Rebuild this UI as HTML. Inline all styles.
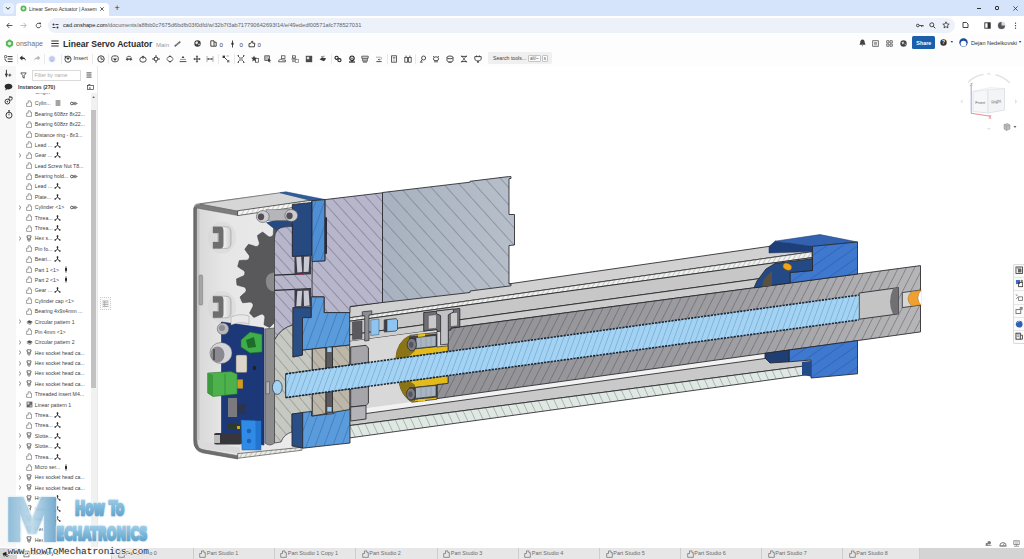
<!DOCTYPE html>
<html lang="en"><head><meta charset="utf-8"><title>Linear Servo Actuator | Assembly 1</title>
<style>
*{box-sizing:border-box}
html,body{margin:0;padding:0}
body{width:1024px;height:559px;overflow:hidden;position:relative;background:#fff;font-family:"Liberation Sans",sans-serif;color:#333}
.abs{position:absolute}
.t{position:absolute;white-space:nowrap;line-height:1}
#tabstrip{left:0;top:0;width:1024px;height:16px;background:#d5e3fb}
#tab{left:16px;top:3px;width:93px;height:13px;background:#fff;border-radius:4px 4px 0 0}
#addr{left:0;top:16px;width:1024px;height:18px;background:#fff}
#pill{left:48px;top:18.3px;width:906.5px;height:14.4px;border-radius:7.5px;background:#edf1f9}
#hdr{left:0;top:34px;width:1024px;height:18px;background:#fdfdfd}
#tb{left:0;top:52px;width:1024px;height:14px;background:#fdfdfd}
#rail{left:0;top:66px;width:16px;height:481px;background:#f7f7f7}
#panel{left:16px;top:66px;width:82px;border-right:0.6px solid #e9e9e9;height:481px;background:#fff;overflow:hidden}
#sbtrack{left:90.6px;top:93px;width:6px;height:454px;background:#f1f1f1}
#sbthumb{left:91px;top:110px;width:5px;height:278px;background:#c2c2c2}
.row{position:absolute;left:0;height:10.4px;width:74px;font-size:5.6px;color:#3a3a3a}
.row span{position:absolute;top:2.3px;white-space:nowrap;line-height:1}
#btm{left:0;top:547.6px;width:1024px;height:12px;background:#d4d4d4}
.bt{position:absolute;top:0;height:12px;font-size:5.45px;color:#6a6a6a;border-right:0.6px solid #cdcdcd;background:#e7e7e7}
.bt span{position:absolute;left:13.3px;top:3.8px;white-space:nowrap;line-height:1}
</style></head><body>
<!-- browser tab strip -->
<div id="tabstrip" class="abs"></div>
<div class="abs" style="left:2.5px;top:3px;width:11px;height:10.5px;border-radius:3.5px;background:#e9f0fd"></div>
<svg class="abs" style="left:5px;top:5.5px" width="6" height="5" viewBox="0 0 6 5"><path d="M1 1.2 L3 3.3 L5 1.2" fill="none" stroke="#333" stroke-width="1"/></svg>
<div id="tab" class="abs"></div>
<svg class="abs" style="left:19.5px;top:5px" width="7" height="7" viewBox="0 0 7 7"><circle cx="3.5" cy="3.5" r="3" fill="#5bb75b"/><circle cx="3.5" cy="3.5" r="1.2" fill="#d9f0d9"/></svg>
<div class="t" style="left:29px;top:6.6px;font-size:5.05px;color:#333">Linear Servo Actuator | Assem</div>
<svg class="abs" style="left:100.2px;top:7px" width="4" height="4" viewBox="0 0 4 4"><path d="M0.3 0.3L3.7 3.7M3.7 0.3L0.3 3.7" stroke="#333" stroke-width="0.8"/></svg>
<div class="t" style="left:114.5px;top:3.5px;font-size:9px;color:#333">+</div>
<div class="abs" style="left:976.5px;top:8px;width:4.6px;height:0.7px;background:#333"></div>
<div class="abs" style="left:994.7px;top:6px;width:4.4px;height:4.4px;border:0.6px solid #333;border-radius:1px"></div>
<svg class="abs" style="left:1012.7px;top:5.6px" width="5" height="5" viewBox="0 0 5 5"><path d="M0.4 0.4L4.6 4.6M4.6 0.4L0.4 4.6" stroke="#333" stroke-width="0.8"/></svg>
<!-- address bar -->
<div id="addr" class="abs"></div>
<svg class="abs" style="left:5.5px;top:22.2px" width="7" height="7" viewBox="0 0 7 7"><path d="M6.4 3.5H1M3.4 0.9L0.8 3.5L3.4 6.1" fill="none" stroke="#444" stroke-width="0.9"/></svg>
<svg class="abs" style="left:19.7px;top:22.2px" width="7" height="7" viewBox="0 0 7 7"><path d="M0.6 3.5H6M3.6 0.9L6.2 3.5L3.6 6.1" fill="none" stroke="#b4b4b4" stroke-width="0.9"/></svg>
<svg class="abs" style="left:34.5px;top:22px" width="7" height="7" viewBox="0 0 7 7"><path d="M5.8 3.5 A2.3 2.3 0 1 1 5 1.8" fill="none" stroke="#444" stroke-width="0.9"/><path d="M4 0.6 L6.2 0.8 L5.6 2.8 Z" fill="#444"/></svg>
<div id="pill" class="abs"></div>
<svg class="abs" style="left:52px;top:22.5px" width="7" height="6" viewBox="0 0 7 6"><circle cx="1.5" cy="1.5" r="1" fill="#333"/><path d="M3.5 1.5H6.5M0.5 4.5H3.5" stroke="#333" stroke-width="0.9"/><circle cx="5.5" cy="4.5" r="1" fill="#333"/></svg>
<div class="t" style="left:63px;top:23px;font-size:5.65px;color:#222">cad.onshape.com<span style="color:#5f6368">/documents/a8fbb0c7675d6bdfb03f0dfd/w/32b7f3ab717790642693f14/e/49ededf00571afc778527031</span></div>
<svg class="abs" style="left:916px;top:22.5px" width="8" height="5" viewBox="0 0 8 5"><circle cx="1.8" cy="2.5" r="1.3" fill="none" stroke="#333" stroke-width="0.9"/><path d="M3.1 2.5H7.4M5.6 2.5V4M7 2.5V3.6" stroke="#333" stroke-width="0.8"/></svg>
<svg class="abs" style="left:929px;top:21.7px" width="7" height="7" viewBox="0 0 7 7"><circle cx="2.8" cy="2.8" r="2" fill="none" stroke="#333" stroke-width="0.9"/><path d="M4.3 4.3L6.3 6.3" stroke="#333" stroke-width="1"/></svg>
<svg class="abs" style="left:941.5px;top:21.3px" width="8" height="8" viewBox="0 0 8 8"><path d="M4 0.8L4.95 2.95L7.2 3.15L5.5 4.65L6 6.9L4 5.7L2 6.9L2.5 4.65L0.8 3.15L3.05 2.95Z" fill="none" stroke="#333" stroke-width="0.8" stroke-linejoin="round"/></svg>
<svg class="abs" style="left:962px;top:21.2px" width="7" height="8" viewBox="0 0 7 8"><path d="M1 1.5H4.5L6 3V6.5H1Z" fill="none" stroke="#333" stroke-width="0.9"/></svg>
<svg class="abs" style="left:983.5px;top:21.7px" width="7" height="7" viewBox="0 0 7 7"><rect x="0.8" y="0.8" width="5.4" height="5.4" fill="none" stroke="#333" stroke-width="0.9"/><rect x="3.6" y="0.8" width="2.6" height="5.4" fill="#333"/></svg>
<svg class="abs" style="left:997px;top:20.7px" width="9" height="9" viewBox="0 0 9 9"><circle cx="4.5" cy="4.5" r="4" fill="#d8dce3"/><path d="M4.5 1A3.5 3.5 0 1 0 8 4.5L4.5 4.5Z" fill="#555"/></svg>
<svg class="abs" style="left:1014px;top:21.5px" width="3" height="8" viewBox="0 0 3 8"><circle cx="1.5" cy="1.2" r="0.65" fill="#333"/><circle cx="1.5" cy="3.7" r="0.65" fill="#333"/><circle cx="1.5" cy="6.2" r="0.65" fill="#333"/></svg>
<!-- onshape header -->
<div id="hdr" class="abs"></div>
<svg class="abs" style="left:4.5px;top:38.5px" width="9" height="9" viewBox="0 0 9 9"><path d="M4.5 0.3L8.1 2.4V6.6L4.5 8.7L0.9 6.6V2.4Z" fill="#5cb85c"/><circle cx="4.5" cy="4.5" r="1.7" fill="#d9f2d9"/></svg>
<div class="t" style="left:15.5px;top:39.6px;font-size:7.4px;color:#707070;transform:scaleX(0.95);transform-origin:0 0">onshape</div>
<svg class="abs" style="left:51px;top:39.5px" width="8" height="7" viewBox="0 0 8 7"><path d="M0.3 1H7.7M0.3 3.5H7.7M0.3 6H7.7" stroke="#333" stroke-width="1.2"/></svg>
<div class="t" style="left:63px;top:40.1px;font-size:8.6px;font-weight:bold;color:#2b2b2b">Linear Servo Actuator</div>
<div class="t" style="left:156px;top:41.9px;font-size:6px;color:#999">Main</div>
<svg class="abs" style="left:174px;top:40.5px" width="7" height="6" viewBox="0 0 7 6"><path d="M1.2 4.8L5.8 1.2" stroke="#444" stroke-width="1.6" stroke-linecap="round"/><path d="M1.6 4.4L5.4 1.6" stroke="#fdfdfd" stroke-width="0.5"/></svg>
<svg class="abs" style="left:193.5px;top:40px" width="7" height="7" viewBox="0 0 7 7"><circle cx="3.5" cy="3.5" r="3.2" fill="#3a3a3a"/><path d="M1.2 2.4L3 1L4.2 2.6L3 4.4L1.6 3.8ZM4.6 3.4L6 3.8L5.2 5.6L4.2 5Z" fill="#e8e8e8"/></svg>
<svg class="abs" style="left:209.5px;top:40px" width="7" height="7" viewBox="0 0 7 7"><path d="M0.8 0.8H4V6.2H0.8ZM4 2.2H6.2V6.2H4" fill="none" stroke="#333" stroke-width="0.9"/></svg>
<div class="t" style="left:219.5px;top:41.6px;font-size:6.2px;color:#444">0</div>
<svg class="abs" style="left:230px;top:39.5px" width="5" height="8" viewBox="0 0 5 8"><path d="M2.5 0.5V7.5" stroke="#333" stroke-width="0.9"/><circle cx="2.5" cy="3.8" r="1.2" fill="#333"/></svg>
<div class="t" style="left:239.5px;top:41.6px;font-size:6.2px;color:#444">0</div>
<svg class="abs" style="left:247.5px;top:39.5px" width="8" height="8" viewBox="0 0 8 8"><path d="M1 3.6H2.6L4 1L4.8 1.4L4.6 3.2H6.8L6.4 6.8H1Z" fill="none" stroke="#333" stroke-width="0.9" stroke-linejoin="round"/></svg>
<div class="t" style="left:257.5px;top:41.6px;font-size:6.2px;color:#444">0</div>
<!-- header right -->
<svg class="abs" style="left:858.5px;top:39px" width="7" height="8" viewBox="0 0 7 8"><path d="M3.5 0.6C1.8 0.6 1.3 2 1.3 3.6L0.5 5.8H6.5L5.7 3.6C5.7 2 5.2 0.6 3.5 0.6ZM2.7 6.4H4.3L3.5 7.4Z" fill="#444"/></svg>
<svg class="abs" style="left:872.2px;top:39.5px" width="7" height="7" viewBox="0 0 7 7"><rect x="0.7" y="0.7" width="5.6" height="5.6" fill="none" stroke="#555" stroke-width="0.8"/><path d="M2 2.4H5M2 3.6H5M2 4.8H5" stroke="#555" stroke-width="0.6"/></svg>
<svg class="abs" style="left:885.8px;top:39.5px" width="7" height="7" viewBox="0 0 7 7"><path d="M0.7 0.7H3V3H0.7ZM4 0.7H6.3V3H4ZM0.7 4H3V6.3H0.7ZM4 4H6.3V6.3H4Z" fill="none" stroke="#555" stroke-width="0.8"/></svg>
<svg class="abs" style="left:899.5px;top:39.5px" width="7" height="7" viewBox="0 0 7 7"><circle cx="3.5" cy="3.5" r="3.2" fill="#444"/><path d="M1.6 2.4L3.3 1.4L4 3L2.8 4.6ZM4.6 3.6L5.8 4L5 5.4Z" fill="#ddd"/></svg>
<div class="abs" style="left:911.6px;top:36.2px;width:23.5px;height:12.6px;background:#1b5faa;border-radius:1.5px"></div>
<div class="t" style="left:916.3px;top:40.9px;font-size:5.4px;font-weight:bold;color:#fff">Share</div>
<svg class="abs" style="left:939.9px;top:39.3px" width="7" height="7" viewBox="0 0 7 7"><circle cx="3.5" cy="3.5" r="3.2" fill="#333"/><text x="3.5" y="5.4" font-size="5" font-weight="bold" text-anchor="middle" fill="#fff" font-family="Liberation Sans, sans-serif">?</text></svg>
<div class="t" style="left:950px;top:41.3px;font-size:3.6px;color:#333">▼</div>
<svg class="abs" style="left:959.2px;top:38.2px" width="9" height="9" viewBox="0 0 9 9"><circle cx="4.5" cy="4.5" r="4.2" fill="#1a4a9c"/><circle cx="4.5" cy="5.6" r="2.9" fill="#fff"/></svg>
<div class="t" style="left:971px;top:40.7px;font-size:5.55px;color:#333">Dejan Nedelkovski</div>
<div class="t" style="left:1018.3px;top:41.3px;font-size:3.6px;color:#333">▼</div>
<div id="tb" class="abs"></div>
<svg class="abs" style="left:3.5px;top:54.5px" width="9" height="8" viewBox="0 0 9 8"><circle cx="1.6" cy="1.6" r="1.2" fill="none" stroke="#3a3a3a" stroke-width="0.8"/><path d="M3.6 1.6H8.6M3.6 4H8.6M3.6 6.6H8.6" stroke="#3a3a3a" stroke-width="1"/><path d="M0.6 3.6L2.6 6.8" stroke="#3a3a3a" stroke-width="0.9"/></svg>
<div class="abs" style="left:16.5px;top:54px;width:0.6px;height:10px;background:#e9e9e9"></div>
<svg class="abs" style="left:18.5px;top:55.0px" width="8" height="7" viewBox="0 0 8 7"><path d="M3.4 0.6L0.6 3L3.4 5.4V3.8C5.2 3.8 6.2 4.6 6.8 6.2C6.8 3.6 5.6 2.2 3.4 2.2Z" fill="#2b2b2b"/></svg>
<svg class="abs" style="left:32.5px;top:55.0px" width="8" height="7" viewBox="0 0 8 7"><path d="M4.6 0.6L7.4 3L4.6 5.4V3.8C2.8 3.8 1.8 4.6 1.2 6.2C1.2 3.6 2.4 2.2 4.6 2.2Z" fill="#b5b5b5"/></svg>
<div class="abs" style="left:44px;top:54px;width:0.6px;height:10px;background:#e9e9e9"></div>
<svg class="abs" style="left:48.0px;top:54.5px" width="8" height="8" viewBox="0 0 8 8"><circle cx="4" cy="4" r="3.5" fill="#dfe6f7"/><circle cx="4" cy="4" r="2" fill="none" stroke="#9fb0e0" stroke-width="0.8"/><path d="M4 3V7" stroke="#9fb0e0" stroke-width="0.8"/></svg>
<div class="abs" style="left:60.5px;top:54px;width:0.6px;height:10px;background:#e9e9e9"></div>
<svg class="abs" style="left:64.0px;top:54.5px" width="8" height="8" viewBox="0 0 8 8"><circle cx="4" cy="4.2" r="3.1" fill="none" stroke="#3a3a3a" stroke-width="0.9"/><path d="M2.2 2.6H5.8L4.8 4.6H3.2Z" fill="#3a3a3a"/><path d="M1.4 0.8V2.6M0.5 1.7H2.3" stroke="#3a3a3a" stroke-width="0.7"/></svg>
<div class="t" style="left:73.5px;top:55.8px;font-size:5.7px;color:#333">Insert</div>
<div class="abs" style="left:92px;top:54px;width:0.6px;height:10px;background:#e9e9e9"></div>
<svg class="abs" style="left:96.5px;top:54.5px" width="8" height="8" viewBox="0 0 8 8"><circle cx="4" cy="4" r="3.2" fill="none" stroke="#3a3a3a" stroke-width="1"/><path d="M4 2V4.2H6" fill="none" stroke="#3a3a3a" stroke-width="0.9"/></svg>
<div class="abs" style="left:108px;top:54px;width:0.6px;height:10px;background:#e9e9e9"></div>
<svg class="abs" style="left:111.0px;top:54.5px" width="8" height="8" viewBox="0 0 8 8"><path d="M0.8 2.2C0.8 0.4 7.2 0.4 7.2 2.2V5C7.2 7.4 0.8 7.4 0.8 5Z" fill="none" stroke="#3a3a3a" stroke-width="0.9"/><path d="M2 3.6H6L4 6Z" fill="#3a3a3a"/></svg>
<svg class="abs" style="left:124.7px;top:54.5px" width="8" height="8" viewBox="0 0 8 8"><path d="M0.6 4.2L2.6 2.4V3.6H5.4V2.4L7.4 4.2L5.4 6V4.8H2.6V6Z" fill="#3a3a3a"/><path d="M1.6 2.6C2.4 0.8 5.6 0.8 6.4 2.6" fill="none" stroke="#3a3a3a" stroke-width="0.8"/></svg>
<svg class="abs" style="left:138.5px;top:54.5px" width="8" height="8" viewBox="0 0 8 8"><ellipse cx="4" cy="4.6" rx="3.2" ry="2.6" fill="none" stroke="#3a3a3a" stroke-width="0.9"/><path d="M4 0.4L5.4 2H2.6Z" fill="#3a3a3a"/><path d="M4 2V4" stroke="#3a3a3a" stroke-width="0.8"/></svg>
<svg class="abs" style="left:152.0px;top:54.5px" width="8" height="8" viewBox="0 0 8 8"><path d="M4 0.5V7.5M0.5 4H7.5" stroke="#3a3a3a" stroke-width="0.9"/><rect x="2.6" y="2.6" width="2.8" height="2.8" fill="#fdfdfd" stroke="#3a3a3a" stroke-width="0.7"/><path d="M4 0.2L4.9 1.3H3.1ZM4 7.8L3.1 6.7H4.9ZM0.2 4L1.3 3.1V4.9ZM7.8 4L6.7 4.9V3.1Z" fill="#3a3a3a"/></svg>
<svg class="abs" style="left:165.7px;top:54.5px" width="8" height="8" viewBox="0 0 8 8"><path d="M1.6 3A2.6 2.6 0 0 1 6.4 3M6.4 5A2.6 2.6 0 0 1 1.6 5" fill="none" stroke="#3a3a3a" stroke-width="0.9"/><path d="M4 0.2L5.2 1.6H2.8ZM4 7.8L2.8 6.4H5.2ZM0.2 4L1.5 2.9V5.1ZM7.8 4L6.5 5.1V2.9Z" fill="#3a3a3a"/></svg>
<svg class="abs" style="left:179.3px;top:54.5px" width="8" height="8" viewBox="0 0 8 8"><path d="M0.6 6.6H7.4" stroke="#3a3a3a" stroke-width="0.9"/><path d="M1 4.4H7" stroke="#888" stroke-width="0.9"/><path d="M4 0.8L5.4 3H2.6Z" fill="#3a3a3a"/></svg>
<svg class="abs" style="left:192.7px;top:54.5px" width="8" height="8" viewBox="0 0 8 8"><path d="M4 0.3L5.3 1.8H2.7ZM4 7.7L2.7 6.2H5.3ZM0.3 4L1.8 2.7V5.3ZM7.7 4L6.2 5.3V2.7Z" fill="#3a3a3a"/><path d="M4 1.4V6.6M1.4 4H6.6" stroke="#3a3a3a" stroke-width="1"/></svg>
<svg class="abs" style="left:206.3px;top:54.5px" width="8" height="8" viewBox="0 0 8 8"><path d="M1 1V7M7 1V7" stroke="#999" stroke-width="0.8"/><path d="M1.6 4H6.4" stroke="#3a3a3a" stroke-width="0.9"/><path d="M1.2 4L2.6 3V5ZM6.8 4L5.4 5V3Z" fill="#3a3a3a"/></svg>
<div class="abs" style="left:218px;top:54px;width:0.6px;height:10px;background:#e9e9e9"></div>
<svg class="abs" style="left:222.0px;top:54.5px" width="8" height="8" viewBox="0 0 8 8"><path d="M1 1L7 7" stroke="#3a3a3a" stroke-width="0.9"/><path d="M0.6 0.6H3V3H0.6Z" fill="#3a3a3a"/><path d="M5 5H7.4V7.4H5Z" fill="#777"/><path d="M4.5 1H7" stroke="#888" stroke-width="0.7"/></svg>
<div class="abs" style="left:233.5px;top:54px;width:0.6px;height:10px;background:#e9e9e9"></div>
<svg class="abs" style="left:237.2px;top:54.5px" width="8" height="8" viewBox="0 0 8 8"><path d="M1 1L7 7M7 1L1 7" stroke="#3a3a3a" stroke-width="0.9"/><rect x="2.2" y="2.2" width="3.6" height="3.6" fill="#aaa"/><path d="M0.5 0.5H2M6 0.5H7.5M0.5 7.5H2M6 7.5H7.5" stroke="#3a3a3a" stroke-width="0.8"/></svg>
<svg class="abs" style="left:250.5px;top:54.5px" width="8" height="8" viewBox="0 0 8 8"><path d="M3 0.6L3.8 2.6L5.8 2.8L4.2 4.2L4.8 6.4L3 5.2L1.2 6.4L1.8 4.2L0.2 2.8L2.2 2.6Z" fill="#3a3a3a"/><rect x="4.6" y="3.4" width="3" height="3.8" fill="none" stroke="#3a3a3a" stroke-width="0.7"/></svg>
<svg class="abs" style="left:263.8px;top:54.5px" width="8" height="8" viewBox="0 0 8 8"><rect x="0.8" y="0.8" width="4.6" height="4.6" fill="#bbb" stroke="#3a3a3a" stroke-width="0.7"/><path d="M4 3.6L7.4 5.4L5.8 5.8L6.6 7.4L5.8 7.6L5.2 6.2L4 7Z" fill="#3a3a3a"/></svg>
<svg class="abs" style="left:277.5px;top:54.5px" width="8" height="8" viewBox="0 0 8 8"><rect x="3.4" y="0.8" width="3.6" height="2.6" fill="none" stroke="#3a3a3a" stroke-width="0.7"/><path d="M0.6 6.8C0.6 4.4 3 3.6 4.4 5H7.4V6.8Z" fill="none" stroke="#3a3a3a" stroke-width="0.8"/></svg>
<svg class="abs" style="left:291.0px;top:54.5px" width="8" height="8" viewBox="0 0 8 8"><rect x="1.4" y="0.8" width="3" height="2.2" fill="none" stroke="#3a3a3a" stroke-width="0.7"/><path d="M0.4 4H5.4M3 3V4" stroke="#3a3a3a" stroke-width="0.7"/><rect x="4.6" y="4.4" width="2.8" height="3" fill="none" stroke="#777" stroke-width="0.7"/><path d="M1 5.2H4M1 6.6H4" stroke="#3a3a3a" stroke-width="0.6"/></svg>
<svg class="abs" style="left:304.7px;top:54.5px" width="8" height="8" viewBox="0 0 8 8"><rect x="0.8" y="0.8" width="6.4" height="6.4" fill="#4a4a4a"/><rect x="1.8" y="1.8" width="2.4" height="2.4" fill="#ddd"/></svg>
<svg class="abs" style="left:318.5px;top:54.5px" width="8" height="8" viewBox="0 0 8 8"><path d="M0.6 4.6L3 2.2L7.2 3.4L5 6.2Z" fill="#3a3a3a"/><path d="M2 1.6L5.6 1.2" stroke="#777" stroke-width="0.8"/></svg>
<div class="abs" style="left:330.5px;top:54px;width:0.6px;height:10px;background:#e9e9e9"></div>
<svg class="abs" style="left:334.0px;top:54.5px" width="8" height="8" viewBox="0 0 8 8"><circle cx="2.6" cy="2.8" r="1.6" fill="none" stroke="#222" stroke-width="1.1"/><circle cx="5.4" cy="5.2" r="1.6" fill="none" stroke="#222" stroke-width="1.1"/></svg>
<svg class="abs" style="left:347.7px;top:54.5px" width="8" height="8" viewBox="0 0 8 8"><circle cx="4" cy="3.2" r="2.2" fill="none" stroke="#222" stroke-width="1.2"/><circle cx="4" cy="3.2" r="0.7" fill="#222"/><path d="M1 7H7" stroke="#222" stroke-width="1.2"/><path d="M4 5.2V7" stroke="#222" stroke-width="1"/></svg>
<svg class="abs" style="left:361.0px;top:54.5px" width="8" height="8" viewBox="0 0 8 8"><path d="M0.8 1.2H7.2V3.2H0.8Z" fill="none" stroke="#3a3a3a" stroke-width="0.8"/><path d="M1.6 3.2V6.2H6.4V3.2M3 3.2V6.2M5 3.2V6.2" fill="none" stroke="#3a3a3a" stroke-width="0.7"/><path d="M2 7.2H6" stroke="#3a3a3a" stroke-width="0.7"/></svg>
<svg class="abs" style="left:374.5px;top:54.5px" width="8" height="8" viewBox="0 0 8 8"><path d="M1 2.2H5.4C7 2.2 7 4.6 5.4 4.6H3" fill="none" stroke="#999" stroke-width="0.8"/><path d="M1.4 6.6H6.6" stroke="#3a3a3a" stroke-width="0.9"/><path d="M3 4.6L4.4 3.6V5.6Z" fill="#3a3a3a"/></svg>
<div class="abs" style="left:386.5px;top:54px;width:0.6px;height:10px;background:#e9e9e9"></div>
<svg class="abs" style="left:390.0px;top:54.5px" width="8" height="8" viewBox="0 0 8 8"><rect x="1.6" y="0.8" width="4.8" height="6.4" fill="none" stroke="#3a3a3a" stroke-width="0.8"/><rect x="2.8" y="2" width="2.6" height="1.6" fill="#888"/><path d="M2.8 5H5.4M2.8 6H5.4" stroke="#888" stroke-width="0.5"/></svg>
<svg class="abs" style="left:403.5px;top:54.5px" width="8" height="8" viewBox="0 0 8 8"><rect x="0.8" y="2.4" width="2.6" height="4.8" fill="none" stroke="#3a3a3a" stroke-width="0.8"/><rect x="4.6" y="2.4" width="2.6" height="4.8" fill="none" stroke="#3a3a3a" stroke-width="0.8"/><path d="M2.1 0.6V2.4M5.9 0.6V2.4" stroke="#3a3a3a" stroke-width="0.8"/></svg>
<div class="abs" style="left:415px;top:54px;width:0.6px;height:10px;background:#e9e9e9"></div>
<svg class="abs" style="left:418.7px;top:54.5px" width="8" height="8" viewBox="0 0 8 8"><circle cx="4.6" cy="3" r="2" fill="none" stroke="#3a3a3a" stroke-width="0.9"/><path d="M3.2 4.6L1.4 7.2H3.6" fill="none" stroke="#3a3a3a" stroke-width="0.9"/></svg>
<svg class="abs" style="left:432.0px;top:54.5px" width="8" height="8" viewBox="0 0 8 8"><ellipse cx="4" cy="3.8" rx="2.6" ry="2" fill="none" stroke="#3a3a3a" stroke-width="0.9"/><path d="M1 1L2 2M7 1L6 2M2 6.8H6" stroke="#3a3a3a" stroke-width="0.8"/></svg>
<svg class="abs" style="left:446.0px;top:54.5px" width="8" height="8" viewBox="0 0 8 8"><ellipse cx="4" cy="2.4" rx="3" ry="1.4" fill="none" stroke="#3a3a3a" stroke-width="0.9"/><path d="M1 2.4V5.6C1 7.4 7 7.4 7 5.6V2.4" fill="none" stroke="#3a3a3a" stroke-width="0.9"/><path d="M2.4 7.4H5.6" stroke="#3a3a3a" stroke-width="0.7"/></svg>
<svg class="abs" style="left:459.7px;top:54.5px" width="8" height="8" viewBox="0 0 8 8"><path d="M1 1.4H7M1 6.6H7" stroke="#3a3a3a" stroke-width="0.9"/><path d="M1.4 0.6L6.6 7.4M6.6 0.6L1.4 7.4" stroke="#3a3a3a" stroke-width="0.7"/></svg>
<svg class="abs" style="left:473.5px;top:54.5px" width="8" height="8" viewBox="0 0 8 8"><path d="M0.8 1.6H7.2V4C7.2 5.2 5.6 5.6 4.6 5.6V7.4H3.4V5.6C2.4 5.6 0.8 5.2 0.8 4Z" fill="none" stroke="#3a3a3a" stroke-width="0.9"/><path d="M2.6 0.4V2M5.4 0.4V2" stroke="#3a3a3a" stroke-width="0.8"/></svg>
<div class="abs" style="left:488.3px;top:52.2px;width:63.6px;height:11.6px;background:#f0f0f0;border-radius:1px"></div>
<div class="t" style="left:493px;top:55.9px;font-size:5.2px;color:#444">Search tools...</div>
<div class="abs" style="left:528px;top:55.3px;width:13.4px;height:6.5px;border:0.5px solid #c4c4c4;background:#fbfbfb;border-radius:1px"></div><div class="t" style="left:530px;top:57.2px;font-size:4.5px;color:#555">alt/~</div>
<div class="abs" style="left:541.8px;top:55.3px;width:5.9px;height:6.5px;border:0.5px solid #c4c4c4;background:#fbfbfb;border-radius:1px"></div><div class="t" style="left:543.7px;top:57.2px;font-size:4.5px;color:#555">s</div>
<svg class="abs" style="left:0;top:0" width="1024" height="559" viewBox="0 0 1024 559">
<defs>
<pattern id="hL" width="8.8" height="8.8" patternUnits="userSpaceOnUse" patternTransform="rotate(48)"><path d="M0 0H9" stroke="#5f5d78" stroke-width="0.9"/></pattern>
<pattern id="hS" width="11.5" height="11.5" patternUnits="userSpaceOnUse" patternTransform="rotate(48)"><path d="M0 0H12" stroke="#5d6879" stroke-width="0.9"/></pattern>
<pattern id="hR" width="7.2" height="7.2" patternUnits="userSpaceOnUse" patternTransform="rotate(-63)"><path d="M0 0H7" stroke="#46464c" stroke-width="0.8"/></pattern>
<pattern id="hW" width="5.2" height="5.2" patternUnits="userSpaceOnUse" patternTransform="rotate(-70)"><path d="M0 0H6" stroke="#4583b5" stroke-width="0.7"/></pattern>
<pattern id="hB" width="8.3" height="8.3" patternUnits="userSpaceOnUse" patternTransform="rotate(-70)"><path d="M0 0H9" stroke="#2a5a9c" stroke-width="0.8"/></pattern>
<pattern id="hB2" width="9" height="9" patternUnits="userSpaceOnUse" patternTransform="rotate(-35)"><path d="M0 0H9" stroke="#244f96" stroke-width="0.8"/></pattern>
<pattern id="hT" width="7.25" height="7.25" patternUnits="userSpaceOnUse" patternTransform="rotate(65)"><path d="M0 0H8" stroke="#55605c" stroke-width="0.7"/></pattern>
<pattern id="hG" width="8.5" height="8.5" patternUnits="userSpaceOnUse" patternTransform="rotate(50)"><path d="M0 0H9" stroke="#6c6c66" stroke-width="0.8"/></pattern>
<pattern id="hH" width="4" height="4" patternUnits="userSpaceOnUse" patternTransform="rotate(-60)"><path d="M0 0H4" stroke="#666" stroke-width="0.6"/></pattern>
<linearGradient id="gHouse" x1="0" x2="1" y1="0" y2="0"><stop offset="0" stop-color="#d6d6d6"/><stop offset="0.25" stop-color="#e6e6e6"/><stop offset="1" stop-color="#ececec"/></linearGradient>
<linearGradient id="gRod" gradientUnits="userSpaceOnUse" x1="440" x2="920" y1="0" y2="0"><stop offset="0" stop-color="#929296"/><stop offset="0.6" stop-color="#9e9ea2"/><stop offset="1" stop-color="#b6b6b9"/></linearGradient>
<linearGradient id="gClip" x1="0" x2="1" y1="0" y2="0"><stop offset="0" stop-color="#c8c8c8"/><stop offset="0.5" stop-color="#f6f6f6"/><stop offset="1" stop-color="#cfcfcf"/></linearGradient>
</defs>
<polygon points="325.0,310.4 812.0,240.2 812.0,251.7 325.0,321.3" fill="#d1d1d1" stroke="#26262a" stroke-width="0.85" stroke-linejoin="round"/>
<polygon points="325.0,321.3 812.0,251.7 812.0,257.6 325.0,324.6" fill="#eef1ee"/>
<polygon points="325.0,321.3 812.0,251.7 812.0,257.6 325.0,324.6" fill="url(#hH)" stroke="#333" stroke-width="0.8"/>
<polygon points="325.0,324.6 812.0,257.6 812.0,271.4 325.0,338.3" fill="#c7c7c7" stroke="#26262a" stroke-width="0.85" stroke-linejoin="round"/>
<polygon points="325.0,338.3 812.0,271.4 812.0,280.1 325.0,344.8" fill="#cdcdcd" stroke="#26262a" stroke-width="0.85" stroke-linejoin="round"/>
<polygon points="325.0,414.1 812.0,346.9 812.0,352.0 325.0,419.2" fill="#f2f2f2" stroke="none"/>
<polygon points="325.0,419.2 812.0,352.0 812.0,365.0 325.0,428.8" fill="#c9c9c9" stroke="#26262a" stroke-width="0.85" stroke-linejoin="round"/>
<polygon points="325.0,428.8 811.0,365.1 811.0,374.2 325.0,441.3" fill="#dfe8e3"/>
<polygon points="325.0,428.8 811.0,365.1 811.0,374.2 325.0,441.3" fill="url(#hT)" stroke="#26262a" stroke-width="0.85" stroke-linejoin="round"/>
<polygon points="350.0,341.5 470.0,325.6 470.0,394.1 350.0,410.6" fill="#d8d8d8" stroke="none"/>
<linearGradient id="gServo" gradientUnits="userSpaceOnUse" x1="382" x2="512" y1="0" y2="0"><stop offset="0" stop-color="#a8b1bf"/><stop offset="1" stop-color="#b6bfc9"/></linearGradient>
<polygon points="382.5,192.5 470.0,182.2 470.0,181.3 508.5,176.6 511.0,176.6 511.0,178.5 509.0,178.7 509.0,214.5 514.5,214.5 514.5,245.0 509.0,245.5 509.0,284.0 511.0,284.0 511.0,285.8 470.0,291.0 470.0,292.5 382.5,302.5" fill="url(#gServo)"/>
<polygon points="382.5,192.5 470.0,182.2 470.0,181.3 508.5,176.6 511.0,176.6 511.0,178.5 509.0,178.7 509.0,214.5 514.5,214.5 514.5,245.0 509.0,245.5 509.0,284.0 511.0,284.0 511.0,285.8 470.0,291.0 470.0,292.5 382.5,302.5" fill="url(#hS)" stroke="#26262a" stroke-width="0.85" stroke-linejoin="round"/>
<polygon points="325.0,199.6 382.5,192.8 382.5,302.5 350.0,306.5 350.0,312.6 324.1,312.6 324.1,296.9 311.3,296.9 311.3,288.5 312.0,261.0 325.0,260.8" fill="#b8b6cb"/>
<polygon points="325.0,199.6 382.5,192.8 382.5,302.5 350.0,306.5 350.0,312.6 324.1,312.6 324.1,296.9 311.3,296.9 311.3,288.5 312.0,261.0 325.0,260.8" fill="url(#hL)" stroke="#26262a" stroke-width="0.85" stroke-linejoin="round"/>
<path d="M197 204 L280 193 L312 200 L312 446 L240 456 L198 449 Q194 448 194 442 L194 210 Q194 204 197 204Z" fill="url(#gHouse)" stroke="#666" stroke-width="0.6"/>
<polygon points="200.0,204.0 280.0,192.8 312.0,200.2 238.0,211.3" fill="#d6d6d6" stroke="#555" stroke-width="0.6"/>
<polygon points="194.2,208.0 196.0,205.2 200.0,204.3 238.0,211.2 238.0,215.6 197.0,208.2" fill="#7c7c7c" stroke="#555" stroke-width="0.4"/>
<path d="M195.5 207 L195.5 440 Q195.6 449.8 203 451.2 L238 457.4" fill="none" stroke="#6f6f6f" stroke-width="3.3"/>
<path d="M193.9 208 L193.9 440.5 Q194 451 202.6 452.8 L238 459" fill="none" stroke="#4e4e4e" stroke-width="0.6"/>
<path d="M198.2 210 L198.2 440" fill="none" stroke="#c4c4c4" stroke-width="2.6"/>
<polygon points="237.5,210.8 311.5,200.2 311.5,204.8 237.5,215.6" fill="#f6f6f4"/>
<polygon points="237.5,210.8 311.5,200.2 311.5,204.8 237.5,215.6" fill="url(#hH)" stroke="#333" stroke-width="0.7"/>
<polygon points="199.0,441.0 240.0,447.5 240.0,454.0 199.0,447.5" fill="#dadada" stroke="none"/>
<polygon points="237.7,453.6 302.0,447.3 302.0,450.2 237.7,458.3" fill="#ecece6"/>
<polygon points="237.7,453.6 302.0,447.3 302.0,450.2 237.7,458.3" fill="url(#hH)" stroke="#333" stroke-width="0.6"/>
<rect x="199" y="275" width="3.6" height="30" rx="1" fill="#a5a5a5" stroke="#777" stroke-width="0.5"/>
<ellipse cx="222" cy="237.6" rx="14" ry="16" fill="#d2d2d2" opacity="0.45"/>
<path d="M213 226.79999999999998 H226 Q231 226.79999999999998 231 232.1 V243.1 Q231 248.4 226 248.4 H213 V242.1 H218 V233.1 H213Z" fill="url(#gClip)" stroke="#8a8a8a" stroke-width="0.5"/>
<path d="M213 226.79999999999998 H221 Q223.5 226.79999999999998 223.5 231.1 V244.1 Q223.5 248.4 221 248.4 H213 V242.1 H218.5 V233.1 H213Z" fill="#6e6e6e"/>
<ellipse cx="222" cy="307" rx="14" ry="16" fill="#d2d2d2" opacity="0.45"/>
<path d="M213 296.2 H226 Q231 296.2 231 301.5 V312.5 Q231 317.8 226 317.8 H213 V311.5 H218 V302.5 H213Z" fill="url(#gClip)" stroke="#8a8a8a" stroke-width="0.5"/>
<path d="M213 296.2 H221 Q223.5 296.2 223.5 300.5 V313.5 Q223.5 317.8 221 317.8 H213 V311.5 H218.5 V302.5 H213Z" fill="#6e6e6e"/>
<clipPath id="cg"><path d="M226 205 H311 V232 H280 L274.5 238 V345 H226Z"/></clipPath>
<polygon points="335.3,282.5 335.1,283.9 336.2,285.4 339.3,287.3 342.3,289.5 341.9,291.0 341.5,292.5 341.1,294.0 340.6,295.5 336.9,295.8 333.3,295.8 331.5,296.6 331.0,297.8 330.4,298.9 330.9,300.8 333.1,303.6 335.2,306.7 334.3,308.0 333.4,309.2 332.5,310.5 331.5,311.7 328.0,310.7 324.6,309.6 322.7,309.6 321.8,310.6 320.8,311.5 320.7,313.4 321.8,316.8 322.6,320.4 321.4,321.3 320.1,322.2 318.8,323.1 317.5,323.9 314.5,321.8 311.7,319.5 309.9,318.9 308.7,319.5 307.5,320.0 306.7,321.7 306.6,325.4 306.2,329.0 304.7,329.4 303.2,329.8 301.7,330.2 300.2,330.5 298.1,327.5 296.2,324.4 294.7,323.3 293.4,323.4 292.1,323.5 290.8,324.8 289.4,328.2 287.8,331.5 286.2,331.4 284.7,331.2 283.1,331.1 281.6,330.8 280.7,327.3 279.9,323.7 278.9,322.1 277.7,321.8 276.4,321.4 274.7,322.3 272.2,324.9 269.6,327.5 268.2,326.9 266.8,326.2 265.4,325.5 264.0,324.8 264.4,321.1 264.9,317.5 264.5,315.7 263.4,314.9 262.4,314.1 260.5,314.4 257.3,316.0 253.9,317.5 252.8,316.4 251.7,315.3 250.6,314.2 249.6,313.1 251.2,309.8 252.9,306.6 253.2,304.7 252.4,303.6 251.7,302.5 249.8,302.1 246.2,302.5 242.6,302.8 241.9,301.4 241.2,300.0 240.6,298.6 240.0,297.1 242.6,294.6 245.4,292.2 246.2,290.5 245.9,289.2 245.6,287.9 244.0,286.9 240.5,286.1 237.0,285.1 236.8,283.5 236.6,282.0 236.6,280.4 236.5,278.9 239.8,277.4 243.2,276.0 244.6,274.8 244.7,273.5 244.9,272.1 243.8,270.6 240.7,268.7 237.7,266.5 238.1,265.0 238.5,263.5 238.9,262.0 239.4,260.5 243.1,260.2 246.7,260.2 248.5,259.4 249.0,258.2 249.6,257.1 249.1,255.2 246.9,252.4 244.8,249.3 245.7,248.0 246.6,246.8 247.5,245.5 248.5,244.3 252.0,245.3 255.4,246.4 257.3,246.4 258.2,245.4 259.2,244.5 259.3,242.6 258.2,239.2 257.4,235.6 258.6,234.7 259.9,233.8 261.2,232.9 262.5,232.1 265.5,234.2 268.3,236.5 270.1,237.1 271.3,236.5 272.5,236.0 273.3,234.3 273.4,230.6 273.8,227.0 275.3,226.6 276.8,226.2 278.3,225.8 279.8,225.5 281.9,228.5 283.8,231.6 285.3,232.7 286.6,232.6 287.9,232.5 289.2,231.2 290.6,227.8 292.2,224.5 293.8,224.6 295.3,224.8 296.9,224.9 298.4,225.2 299.3,228.7 300.1,232.3 301.1,233.9 302.3,234.2 303.6,234.6 305.3,233.7 307.8,231.1 310.4,228.5 311.8,229.1 313.2,229.8 314.6,230.5 316.0,231.2 315.6,234.9 315.1,238.5 315.5,240.3 316.6,241.1 317.6,241.9 319.5,241.6 322.7,240.0 326.1,238.5 327.2,239.6 328.3,240.7 329.4,241.8 330.4,242.9 328.8,246.2 327.1,249.4 326.8,251.3 327.6,252.4 328.3,253.5 330.2,253.9 333.8,253.5 337.4,253.2 338.1,254.6 338.8,256.0 339.4,257.4 340.0,258.9 337.4,261.4 334.6,263.8 333.8,265.5 334.1,266.8 334.4,268.1 336.0,269.1 339.5,269.9 343.0,270.9 343.2,272.5 343.4,274.0 343.4,275.6 343.5,277.1 340.2,278.6 336.8,280.0 335.4,281.2" fill="#59595c" stroke="#3a3a3c" stroke-width="0.5" clip-path="url(#cg)"/>
<path d="M274.5 272 Q265 273 265.5 282 Q266 291 274.5 292Z" fill="#8a8a8e" stroke="#444" stroke-width="0.4"/>
<polygon points="266.0,222.5 292.5,216.0 292.5,226.5 284.0,227.0 276.0,230.5" fill="#264a80" stroke="none"/>
<path id="fl" d="M274.5 238 Q275 228 284 227 L292.5 226.3 L292.5 256 L312 255 L312 298 L311.3 307.7 L292.7 307.7 L292.7 325 Q281 328 274.5 340Z" fill="#b8b6cb"/>
<path d="M274.5 238 Q275 228 284 227 L292.5 226.3 L292.5 256 L312 255 L312 298 L311.3 307.7 L292.7 307.7 L292.7 325 Q281 328 274.5 340Z" fill="url(#hL)" stroke="#2a2a2e" stroke-width="0.7"/>
<path d="M274.5 275.2 L311 273.6 M274.5 290.3 L311 288.7" stroke="#2a2a2e" stroke-width="1.3"/>
<path id="hub" d="M274.5 340 Q281 328 292.7 325 L292.7 357 L302.5 355 L302.5 350 L312.3 349 L312.3 370.2 L285.7 373.9 L285.7 397.6 L312.3 394.0 L312.3 412 L292 414 L292 432 Q284 434 281 442 L274.5 443Z" fill="#c6c8c2"/>
<path d="M274.5 340 Q281 328 292.7 325 L292.7 357 L302.5 355 L302.5 350 L312.3 349 L312.3 370.2 L285.7 373.9 L285.7 397.6 L312.3 394.0 L312.3 412 L292 414 L292 432 Q284 434 281 442 L274.5 443Z" fill="url(#hG)" stroke="#2a2a2e" stroke-width="0.7"/>
<path d="M265 329 L274.5 328 L274.5 443 Q270 447 265 443Z" fill="#8c8c8e" stroke="#4a4a4a" stroke-width="0.7"/>
<polygon points="280.0,192.6 286.0,191.8 325.0,199.5 312.0,200.8" fill="#2f5c9c" stroke="#24487c" stroke-width="0.5"/>
<polygon points="292.3,204.5 312.0,202.5 312.0,255.0 292.3,256.5" fill="#264a80" stroke="#26262a" stroke-width="0.85" stroke-linejoin="round"/>
<polygon points="312.0,200.7 324.8,199.6 324.8,260.8 312.0,261.5" fill="#4f8fd3"/>
<polygon points="312.0,200.7 324.8,199.6 324.8,260.8 312.0,261.5" fill="url(#hB)" stroke="#26262a" stroke-width="0.85" stroke-linejoin="round"/>
<polygon points="324.8,217.5 327.0,217.3 327.0,253.8 324.8,254.0" fill="#2a2a3a" stroke="none"/>
<path d="M294.5 256 L311 255.4 L311 273.4 L294.5 274.2Z" fill="#3c3c48"/><path d="M296.3 257 L301.2 256.8 L302.2 272 L297.3 272.6Z M304 256.7 L309.6 256.4 L308.6 271.7 L303.6 272Z" fill="#c9c9d3"/><path d="M298 274.6 H304" stroke="#a03060" stroke-width="0.8"/>
<path d="M294.5 289.6 L311 288.8 L311 306.6 L294.5 307.2Z" fill="#3c3c48"/><path d="M297.3 291 L302.2 290.8 L301.2 306 L296.3 306.2Z M303.6 290.7 L308.6 290.4 L309.6 305.6 L304 305.9Z" fill="#c9c9d3"/>
<polygon points="293.2,307.7 311.3,307.7 311.3,317.6 302.5,317.6 302.5,355.0 293.2,357.0" fill="#2a4f86" stroke="#26262a" stroke-width="0.85" stroke-linejoin="round"/>
<polygon points="311.3,296.9 324.1,296.9 324.1,312.6 349.7,312.6 349.7,345.1 302.5,350.0 302.5,317.6 311.3,317.6" fill="#5a9bdb"/>
<polygon points="311.3,296.9 324.1,296.9 324.1,312.6 349.7,312.6 349.7,345.1 302.5,350.0 302.5,317.6 311.3,317.6" fill="url(#hB)" stroke="#26262a" stroke-width="0.85" stroke-linejoin="round"/>
<polygon points="292.0,414.0 302.7,412.5 302.7,448.0 292.0,446.0" fill="#2a4f86" stroke="#26262a" stroke-width="0.85" stroke-linejoin="round"/>
<polygon points="302.7,412.4 311.5,411.5 311.5,416.0 334.0,413.5 334.0,409.5 350.0,408.0 350.0,443.0 302.7,448.2" fill="#5a9bdb"/>
<polygon points="302.7,412.4 311.5,411.5 311.5,416.0 334.0,413.5 334.0,409.5 350.0,408.0 350.0,443.0 302.7,448.2" fill="url(#hB)" stroke="#26262a" stroke-width="0.85" stroke-linejoin="round"/>
<polygon points="312.3,349.0 326.0,347.6 326.0,368.3 312.3,370.2" fill="#bdb7aa"/>
<polygon points="312.3,349.0 326.0,347.6 326.0,368.3 312.3,370.2" fill="url(#hG)" stroke="#26262a" stroke-width="0.85" stroke-linejoin="round"/>
<polygon points="326.0,347.6 332.5,346.9 332.5,367.4 326.0,368.3" fill="#5b5b5e" stroke="#26262a" stroke-width="0.85" stroke-linejoin="round"/>
<polygon points="332.5,346.9 349.7,345.1 349.7,365.1 332.5,367.4" fill="#bdb7aa"/>
<polygon points="332.5,346.9 349.7,345.1 349.7,365.1 332.5,367.4" fill="url(#hG)" stroke="#26262a" stroke-width="0.85" stroke-linejoin="round"/>
<polygon points="312.3,394.0 326.0,392.1 326.0,413.6 312.3,416.0" fill="#bdb7aa"/>
<polygon points="312.3,394.0 326.0,392.1 326.0,413.6 312.3,416.0" fill="url(#hG)" stroke="#26262a" stroke-width="0.85" stroke-linejoin="round"/>
<polygon points="326.0,392.1 332.5,391.2 332.5,412.5 326.0,413.6" fill="#5b5b5e" stroke="#26262a" stroke-width="0.85" stroke-linejoin="round"/>
<polygon points="332.5,391.2 349.7,388.9 349.7,409.5 332.5,412.5" fill="#bdb7aa"/>
<polygon points="332.5,391.2 349.7,388.9 349.7,409.5 332.5,412.5" fill="url(#hG)" stroke="#26262a" stroke-width="0.85" stroke-linejoin="round"/>
<rect x="327.3" y="347.5" width="4.2" height="4.5" fill="#9fd0f2"/>
<rect x="327.3" y="407" width="4.2" height="4.5" fill="#9fd0f2"/>
<polygon points="350.7,347.0 366.0,345.3 368.4,348.0 368.4,362.5 350.7,364.9" fill="#a6a6aa" stroke="#26262a" stroke-width="0.85" stroke-linejoin="round"/>
<polygon points="350.7,388.8 368.4,386.4 368.4,403.0 366.0,405.5 350.7,407.0" fill="#a6a6aa" stroke="#26262a" stroke-width="0.85" stroke-linejoin="round"/>
<polygon points="350.7,407.0 366.0,405.5 366.0,419.0 350.7,421.0" fill="#b4b4b8" stroke="#26262a" stroke-width="0.85" stroke-linejoin="round"/>
<polygon points="352.5,322.0 362.0,321.0 362.0,338.5 352.5,339.5" fill="#5a5a60" stroke="#333" stroke-width="0.5"/>
<path d="M362.3 311.8 L371.8 310.8 L371.8 314.5 L369 315.2 L369 340.5 L364.7 341 L364.7 315.8 L362.3 315.5Z" fill="#8d8d94" stroke="#2a2a2e" stroke-width="0.7"/>
<polygon points="370.8,320.0 379.0,319.0 379.0,334.5 370.8,335.5" fill="#8fc3f0" stroke="#356" stroke-width="0.5"/>
<polygon points="384.2,320.0 396.0,318.6 397.5,320.0 397.5,329.5 396.0,331.0 384.2,332.0" fill="#8cc4f2" stroke="#2a2a2e" stroke-width="0.7"/>
<polygon points="384.2,320.0 387.3,319.6 387.3,331.7 384.2,332.0" fill="#3d3d42" stroke="none"/>
<polygon points="448.0,328.5 920.5,265.6 920.5,331.9 437.0,398.6 437.0,384.5 448.0,383.3 448.0,375.6 448.0,351.5" fill="url(#gRod)"/>
<polygon points="448.0,328.5 920.5,265.6 920.5,331.9 437.0,398.6 437.0,384.5 448.0,383.3 448.0,375.6 448.0,351.5" fill="url(#hR)" stroke="#26262a" stroke-width="0.85" stroke-linejoin="round"/>
<polygon points="423.7,312.6 459.8,308.5 459.8,327.0 451.0,328.0 451.0,330.0 437.0,331.6 437.0,329.6 423.7,331.0" fill="#6f6f74" stroke="#26262a" stroke-width="0.85" stroke-linejoin="round"/>
<polygon points="428.3,315.5 436.5,314.6 436.5,328.2 428.3,329.1" fill="#c9c9cb" stroke="#444" stroke-width="0.5"/>
<polygon points="450.5,313.0 457.5,312.2 457.5,325.8 450.5,326.6" fill="#c9c9cb" stroke="#444" stroke-width="0.5"/>
<path d="M436.5 311 L453.4 309.1 L453.4 312 L448.3 314.8 L448.3 344 L440.6 344.9 L440.6 315.6 L436.5 313.6Z" fill="#c2c2c6" stroke="#2a2a2e" stroke-width="0.8"/>
<path d="M395.8 358.7 Q397 341 410.5 335.3 L437 332.4 L437 347 L448 345.8 L448 351.5Z" fill="#e3bc1c" stroke="#2a2a2e" stroke-width="0.7"/>
<path d="M395.8 358.7 Q397 341 410.5 335.3 L415 334.9 L415 351.1 L409 356.3Z" fill="#8a7416"/>
<path d="M409 336.6 L437 333.6 L437 347 L409 350Z" fill="#3f4047"/>
<path d="M418 334.5 L425 333.7 L425 336.6 L418 337.4Z" fill="#e8c61e"/>
<path d="M416 337.6 L436 335.4 L436 346.2 L416 348.4Z" fill="#a9b5c1" stroke="#2a2a2e" stroke-width="0.6"/>
<path d="M421 337 V347.8 M426 336.5 V347.3 M431 336 V346.8" stroke="#8a97a5" stroke-width="0.6"/>
<ellipse cx="411.8" cy="344.6" rx="4.6" ry="6.2" fill="#7b7b84" stroke="#2a2a2e" stroke-width="0.7"/><ellipse cx="411.2" cy="344.8" rx="2.2" ry="3" fill="#55555e"/>
<path d="M399 382.2 L448 375.6 L448 383.3 L437 384.5 L437 399.2 L412 402.2 Q401.5 396 399 382.2Z" fill="#e3bc1c" stroke="#2a2a2e" stroke-width="0.7"/>
<path d="M399 382.2 Q401.5 396 412 402.2 L415 401.8 L415 385.0 L410 381.3Z" fill="#8a7416"/>
<path d="M409 387.4 L437 384.4 L437 397.6 L409 400.6Z" fill="#3f4047"/>
<path d="M418 399.6 L425 398.8 L425 401 L418 401.8Z" fill="#e8c61e"/>
<path d="M415.5 387.6 L436 385.4 L436 396.2 L415.5 398.4Z" fill="#a9b5c1" stroke="#2a2a2e" stroke-width="0.6"/>
<path d="M421 387 V397.8 M426 386.5 V397.3 M431 386 V396.8" stroke="#8a97a5" stroke-width="0.6"/>
<ellipse cx="411" cy="394" rx="4.4" ry="6" fill="#7b7b84" stroke="#2a2a2e" stroke-width="0.7"/><ellipse cx="410.4" cy="394.2" rx="2.1" ry="2.9" fill="#55555e"/>
<polygon points="859.2,293.0 898.5,287.6 898.5,313.9 859.2,319.2" fill="#c4c4c4" stroke="#26262a" stroke-width="0.85" stroke-linejoin="round"/>
<path d="M898.5 287.6 L893 288.8 Q887 302.2 893 314.3 L898.5 313.9Z" fill="#707074"/>
<polygon points="902.3,292.6 921.0,290.0 921.0,305.0 902.3,307.6" fill="#d6d6d6" stroke="#2a2a2e" stroke-width="0.8"/>
<path d="M921.4 290.3 L911.5 291.6 Q904.5 298.8 911.5 306 L921.4 304.8 Q914.5 298 921.4 290.3Z" fill="#f0a030" stroke="#8a5a10" stroke-width="0.4"/><path d="M921.8 289.5 Q915 298 921.8 306 Z" fill="#fff"/>
<polygon points="285.7,373.9 858.7,295.1 858.7,319.9 285.7,397.6" fill="#a3d2f3"/>
<polygon points="285.7,373.9 858.7,295.1 858.7,319.9 285.7,397.6" fill="url(#hW)" stroke="none"/>
<path d="M285.7 373.9 L858.7 295.1" stroke="#1d2733" stroke-width="1.6" stroke-dasharray="2.2 1.1" fill="none"/>
<path d="M285.7 397.6 L858.7 319.9" stroke="#1d2733" stroke-width="1.6" stroke-dasharray="2.2 1.1" fill="none"/>
<path d="M285.7 373.9 V397.6" stroke="#1d2733" stroke-width="0.8"/>
<ellipse cx="277.3" cy="387.4" rx="4.9" ry="7" fill="#a3d2f3" stroke="#234" stroke-width="0.7"/>
<polygon points="266.0,382.0 269.5,381.6 269.5,393.5 266.0,394.0" fill="#b5b5b5" stroke="#444" stroke-width="0.5"/>
<polygon points="769.0,246.5 775.0,241.2 812.5,246.3 812.5,251.5 769.0,253.0" fill="#1f3f7a" stroke="#162f5e" stroke-width="0.5"/>
<polygon points="775.0,241.2 820.0,234.6 857.5,242.0 812.5,246.3" fill="#3363b0" stroke="#1f3f78" stroke-width="0.6"/>
<polygon points="812.5,246.3 857.5,242.0 857.5,274.0 790.0,283.0 790.0,272.5 812.5,270.5" fill="#3f78cf"/>
<polygon points="812.5,246.3 857.5,242.0 857.5,274.0 790.0,283.0 790.0,272.5 812.5,270.5" fill="url(#hB2)" stroke="#26262a" stroke-width="0.85" stroke-linejoin="round"/>
<polygon points="775.0,263.5 812.5,258.8 812.5,270.5 790.0,272.5 790.0,283.0 754.0,287.8 757.0,281.0 766.0,269.0" fill="#244a86" stroke="#26262a" stroke-width="0.85" stroke-linejoin="round"/>
<polygon points="762.0,286.7 764.0,279.0 772.0,271.0 772.0,285.4" fill="#5a5040" stroke="none"/>
<ellipse cx="787.2" cy="266.6" rx="4.6" ry="3.3" fill="#f2a516" stroke="#7a4a08" stroke-width="0.4" transform="rotate(25 787 267)"/>
<polygon points="789.0,350.0 857.5,340.6 857.5,373.8 811.0,378.0 811.0,360.0 789.0,361.8" fill="#3f78cf"/>
<polygon points="789.0,350.0 857.5,340.6 857.5,373.8 811.0,378.0 811.0,360.0 789.0,361.8" fill="url(#hB2)" stroke="#26262a" stroke-width="0.85" stroke-linejoin="round"/>
<polygon points="765.0,353.3 789.0,350.0 789.0,361.8 770.0,363.0 765.0,358.0" fill="#1f3f74" stroke="#26262a" stroke-width="0.85" stroke-linejoin="round"/>
<polygon points="802.0,362.0 811.0,361.0 811.0,376.5 802.0,375.0" fill="#234a88" stroke="none"/>
<polygon points="221.5,322.0 264.0,328.0 264.0,445.0 221.5,441.0" fill="#1c3878" stroke="#14285a" stroke-width="0.6"/>
<rect x="266" y="209.5" width="24" height="11" fill="#b5b5ba" stroke="#666" stroke-width="0.4"/>
<ellipse cx="262.8" cy="216.5" rx="6.4" ry="6" fill="#cdcdd1" stroke="#555" stroke-width="0.6"/>
<ellipse cx="261.0" cy="216.8" rx="3.2" ry="3.4" fill="#505056"/>
<ellipse cx="291.3" cy="215.5" rx="6.4" ry="6" fill="#cdcdd1" stroke="#555" stroke-width="0.6"/>
<ellipse cx="289.5" cy="215.8" rx="3.2" ry="3.4" fill="#505056"/>
<path d="M231 317 Q240 313 249 316 L249 324 Q240 321 231 325Z" fill="#e8e8e8" stroke="#888" stroke-width="0.4"/>
<ellipse cx="223" cy="328.8" rx="5.8" ry="5.8" fill="#b9b9bd" stroke="#555" stroke-width="0.5"/><ellipse cx="222" cy="328" rx="3" ry="3" fill="#8c8c92"/>
<ellipse cx="221" cy="353" rx="11" ry="10.5" fill="#d6d6da" stroke="#555" stroke-width="0.5"/><ellipse cx="217.5" cy="354.5" rx="7" ry="8" fill="#8a8a90"/><path d="M214 349 V360" stroke="#444" stroke-width="1.5"/>
<path d="M241 340 L250 332 L262 334.5 L262 352 L250 353 L241 347Z" fill="#3fae49" stroke="#1d6b28" stroke-width="0.5"/><path d="M246 340 L254 337 L256 347 L248 348Z" fill="#1f6b2a"/>
<rect x="236" y="355" width="11" height="17.5" rx="1.5" fill="#dcd6ca" stroke="#666" stroke-width="0.5"/>
<rect x="253" y="366" width="3" height="4" fill="#222"/>
<polygon points="207.7,373.0 231.0,371.6 237.2,374.0 237.2,394.0 213.0,396.5 207.7,393.0" fill="#4db24c" stroke="#1d6b28" stroke-width="0.5"/>
<polygon points="207.7,373.0 213.0,375.0 213.0,396.5 207.7,393.0" fill="#3c9a3e" stroke="none"/>
<path d="M225 374 V395" stroke="#2a7a2e" stroke-width="0.6"/>
<rect x="237.3" y="379.5" width="5.6" height="9" fill="#d29a1e"/>
<rect x="228" y="398" width="9" height="19" fill="#7a7a7e"/><rect x="238" y="404" width="8" height="10" fill="#2a3350"/><rect x="228" y="424" width="14" height="5" fill="#2e3a2e"/><rect x="237" y="426" width="3" height="3" fill="#c9a51e"/>
<rect x="214" y="433" width="28" height="11.5" rx="2" fill="#37373b"/><rect x="214" y="435" width="6" height="8" fill="#bdbdbd"/>
<polygon points="241.0,420.0 261.0,420.6 261.0,450.0 242.0,450.0" fill="#2f8be6" stroke="#1b5aa8" stroke-width="0.5"/>
<polygon points="255.5,421.0 261.0,421.0 261.0,450.0 255.5,450.0" fill="#2274cf" stroke="none"/>
<circle cx="249" cy="431" r="2.3" fill="#1c62b8"/><circle cx="249" cy="441" r="2.3" fill="#1c62b8"/>
</svg>
<!-- left rail + panel -->
<div id="rail" class="abs"></div>
<div id="panel" class="abs"></div>
<svg class="abs" style="left:4.0px;top:68.5px" width="8" height="9" viewBox="0 0 8 9"><path d="M2.4 0.8V8.2" stroke="#3a3a3a" stroke-width="1"/><circle cx="2.4" cy="5.6" r="1.3" fill="#3a3a3a"/><path d="M5.8 4.6V7.6M4.3 6.1H7.3" stroke="#3a3a3a" stroke-width="0.9"/></svg>
<svg class="abs" style="left:3.5px;top:82.5px" width="9" height="8" viewBox="0 0 9 8"><path d="M4.5 0.8C6.8 0.8 8.4 2 8.4 3.6C8.4 5.2 6.8 6.4 4.5 6.4C4 6.4 3.6 6.35 3.2 6.25L1.2 7.4L1.8 5.6C1 5.1 0.6 4.4 0.6 3.6C0.6 2 2.2 0.8 4.5 0.8Z" fill="#2b2b2b"/></svg>
<svg class="abs" style="left:3.5px;top:95.5px" width="9" height="9" viewBox="0 0 9 9"><circle cx="3.4" cy="5.6" r="2.4" fill="none" stroke="#3a3a3a" stroke-width="1"/><circle cx="3.4" cy="5.6" r="0.8" fill="#3a3a3a"/><circle cx="6.6" cy="2.6" r="1.6" fill="none" stroke="#3a3a3a" stroke-width="0.9"/><path d="M5 0.6L8.4 1.4" stroke="#3a3a3a" stroke-width="0.8"/></svg>
<svg class="abs" style="left:4.5px;top:109.5px" width="8" height="9" viewBox="0 0 8 9"><circle cx="4" cy="5.2" r="3" fill="none" stroke="#3a3a3a" stroke-width="1"/><path d="M3 0.8H5M4 0.8V2.2M4 3.6V5.4" stroke="#3a3a3a" stroke-width="0.9"/></svg>
<svg class="abs" style="left:19.8px;top:71.8px" width="7" height="7" viewBox="0 0 7 7"><path d="M0.8 0.9H6.2L4.2 3.6V6.2L2.8 5.4V3.6Z" fill="none" stroke="#3a3a3a" stroke-width="0.8" stroke-linejoin="round"/></svg>
<div class="abs" style="left:32px;top:69.5px;width:48.5px;height:11px;border:0.6px solid #dadada;background:#fff"></div>
<div class="t" style="left:34.5px;top:72.6px;font-size:5.2px;color:#aaa">Filter by name</div>
<svg class="abs" style="left:86.2px;top:72.0px" width="6" height="6" viewBox="0 0 6 6"><path d="M0.5 0.9H5.5M0.5 3H5.5M0.5 5.1H5.5" stroke="#3a3a3a" stroke-width="0.9"/></svg>
<div class="t" style="left:18px;top:84.5px;font-size:5.15px;color:#3a3a3a;font-weight:bold">Instances (270)</div>
<svg class="abs" style="left:86.8px;top:84.3px" width="7" height="6" viewBox="0 0 7 6"><rect x="0.6" y="1.4" width="5.8" height="4" fill="none" stroke="#3a3a3a" stroke-width="0.7"/><path d="M0.6 1.4L2 0.5H3.4" fill="none" stroke="#3a3a3a" stroke-width="0.7"/><path d="M1.6 4.4L3 3L4 4.4Z" fill="#3a3a3a"/></svg>
<div class="abs" style="left:16px;top:92.5px;width:74px;height:3.2px;overflow:hidden"><div class="t" style="left:19px;top:-2.6px;font-size:5.6px;color:#666">Origin</div><div class="t" style="left:12px;top:-2.2px;font-size:4px;color:#666">▾</div></div>
<div id="sbtrack" class="abs"></div><div id="sbthumb" class="abs"></div>
<div class="t" style="left:91.7px;top:95.5px;font-size:3.6px;color:#555">▲</div>
<svg class="abs" style="left:26.3px;top:99.8px" width="6" height="7" viewBox="0 0 6 7"><path d="M0.6 3.1H2.2V0.8H4.3V2.3H5.5V6.4H0.6Z" fill="none" stroke="#666" stroke-width="0.6" stroke-linejoin="round"/></svg>
<div class="t" style="left:34.8px;top:101.3px;font-size:5.2px;color:#444">Cylin...</div>
<svg class="abs" style="left:54.8px;top:100.3px" width="6" height="6" viewBox="0 0 6 6"><path d="M0.6 1H5.4M0.6 3H5.4M0.6 5H5.4" stroke="#333" stroke-width="0.9"/></svg>
<svg class="abs" style="left:69.5px;top:100.8px" width="8" height="5" viewBox="0 0 8 5"><circle cx="1.8" cy="2.5" r="1.3" fill="none" stroke="#333" stroke-width="0.8"/><path d="M3.2 2.5H7.6M3.2 1.4H6.4M3.2 3.6H6.4" stroke="#333" stroke-width="0.6"/></svg>
<svg class="abs" style="left:26.3px;top:110.2px" width="6" height="7" viewBox="0 0 6 7"><path d="M0.6 3.1H2.2V0.8H4.3V2.3H5.5V6.4H0.6Z" fill="none" stroke="#666" stroke-width="0.6" stroke-linejoin="round"/></svg>
<div class="t" style="left:34.8px;top:111.7px;font-size:5.2px;color:#444">Bearing 608zz 8x22...</div>
<svg class="abs" style="left:26.3px;top:120.6px" width="6" height="7" viewBox="0 0 6 7"><path d="M0.6 3.1H2.2V0.8H4.3V2.3H5.5V6.4H0.6Z" fill="none" stroke="#666" stroke-width="0.6" stroke-linejoin="round"/></svg>
<div class="t" style="left:34.8px;top:122.1px;font-size:5.2px;color:#444">Bearing 608zz 8x22...</div>
<svg class="abs" style="left:26.3px;top:131.0px" width="6" height="7" viewBox="0 0 6 7"><path d="M0.6 3.1H2.2V0.8H4.3V2.3H5.5V6.4H0.6Z" fill="none" stroke="#666" stroke-width="0.6" stroke-linejoin="round"/></svg>
<div class="t" style="left:34.8px;top:132.5px;font-size:5.2px;color:#444">Distance ring - 8x3...</div>
<svg class="abs" style="left:26.3px;top:141.4px" width="6" height="7" viewBox="0 0 6 7"><path d="M0.6 3.1H2.2V0.8H4.3V2.3H5.5V6.4H0.6Z" fill="none" stroke="#666" stroke-width="0.6" stroke-linejoin="round"/></svg>
<div class="t" style="left:34.8px;top:142.9px;font-size:5.2px;color:#444">Lead ...</div>
<svg class="abs" style="left:54.3px;top:141.9px" width="7" height="6" viewBox="0 0 7 6"><path d="M3.5 0.6V3.2L1 5.2M3.5 3.2L6 5.2" fill="none" stroke="#2b2b2b" stroke-width="1"/><circle cx="3.5" cy="1.2" r="0.9" fill="#2b2b2b"/><circle cx="1.1" cy="5" r="0.8" fill="#2b2b2b"/><circle cx="5.9" cy="5" r="0.8" fill="#2b2b2b"/></svg>
<svg class="abs" style="left:18.0px;top:152.8px" width="4" height="5" viewBox="0 0 4 5"><path d="M1 0.6L3 2.5L1 4.4" fill="none" stroke="#555" stroke-width="0.7"/></svg>
<svg class="abs" style="left:26.3px;top:151.8px" width="6" height="7" viewBox="0 0 6 7"><path d="M0.6 3.1H2.2V0.8H4.3V2.3H5.5V6.4H0.6Z" fill="none" stroke="#666" stroke-width="0.6" stroke-linejoin="round"/></svg>
<div class="t" style="left:34.8px;top:153.2px;font-size:5.2px;color:#444">Gear ...</div>
<svg class="abs" style="left:54.3px;top:152.2px" width="7" height="6" viewBox="0 0 7 6"><path d="M3.5 0.6V3.2L1 5.2M3.5 3.2L6 5.2" fill="none" stroke="#2b2b2b" stroke-width="1"/><circle cx="3.5" cy="1.2" r="0.9" fill="#2b2b2b"/><circle cx="1.1" cy="5" r="0.8" fill="#2b2b2b"/><circle cx="5.9" cy="5" r="0.8" fill="#2b2b2b"/></svg>
<svg class="abs" style="left:26.3px;top:162.1px" width="6" height="7" viewBox="0 0 6 7"><path d="M0.6 3.1H2.2V0.8H4.3V2.3H5.5V6.4H0.6Z" fill="none" stroke="#666" stroke-width="0.6" stroke-linejoin="round"/></svg>
<div class="t" style="left:34.8px;top:163.6px;font-size:5.2px;color:#444">Lead Screw Nut T8...</div>
<svg class="abs" style="left:26.3px;top:172.5px" width="6" height="7" viewBox="0 0 6 7"><path d="M0.6 3.1H2.2V0.8H4.3V2.3H5.5V6.4H0.6Z" fill="none" stroke="#666" stroke-width="0.6" stroke-linejoin="round"/></svg>
<div class="t" style="left:34.8px;top:174.0px;font-size:5.2px;color:#444">Bearing hold...</div>
<svg class="abs" style="left:69.5px;top:173.5px" width="8" height="5" viewBox="0 0 8 5"><circle cx="1.8" cy="2.5" r="1.3" fill="none" stroke="#333" stroke-width="0.8"/><path d="M3.2 2.5H7.6M3.2 1.4H6.4M3.2 3.6H6.4" stroke="#333" stroke-width="0.6"/></svg>
<svg class="abs" style="left:26.3px;top:182.9px" width="6" height="7" viewBox="0 0 6 7"><path d="M0.6 3.1H2.2V0.8H4.3V2.3H5.5V6.4H0.6Z" fill="none" stroke="#666" stroke-width="0.6" stroke-linejoin="round"/></svg>
<div class="t" style="left:34.8px;top:184.4px;font-size:5.2px;color:#444">Lead ...</div>
<svg class="abs" style="left:54.3px;top:183.4px" width="7" height="6" viewBox="0 0 7 6"><path d="M3.5 0.6V3.2L1 5.2M3.5 3.2L6 5.2" fill="none" stroke="#2b2b2b" stroke-width="1"/><circle cx="3.5" cy="1.2" r="0.9" fill="#2b2b2b"/><circle cx="1.1" cy="5" r="0.8" fill="#2b2b2b"/><circle cx="5.9" cy="5" r="0.8" fill="#2b2b2b"/></svg>
<svg class="abs" style="left:26.3px;top:193.3px" width="6" height="7" viewBox="0 0 6 7"><path d="M0.6 3.1H2.2V0.8H4.3V2.3H5.5V6.4H0.6Z" fill="none" stroke="#666" stroke-width="0.6" stroke-linejoin="round"/></svg>
<div class="t" style="left:34.8px;top:194.8px;font-size:5.2px;color:#444">Plate...</div>
<svg class="abs" style="left:54.3px;top:193.8px" width="7" height="6" viewBox="0 0 7 6"><path d="M3.5 0.6V3.2L1 5.2M3.5 3.2L6 5.2" fill="none" stroke="#2b2b2b" stroke-width="1"/><circle cx="3.5" cy="1.2" r="0.9" fill="#2b2b2b"/><circle cx="1.1" cy="5" r="0.8" fill="#2b2b2b"/><circle cx="5.9" cy="5" r="0.8" fill="#2b2b2b"/></svg>
<svg class="abs" style="left:18.0px;top:204.7px" width="4" height="5" viewBox="0 0 4 5"><path d="M1 0.6L3 2.5L1 4.4" fill="none" stroke="#555" stroke-width="0.7"/></svg>
<svg class="abs" style="left:26.3px;top:203.7px" width="6" height="7" viewBox="0 0 6 7"><path d="M0.6 3.1H2.2V0.8H4.3V2.3H5.5V6.4H0.6Z" fill="none" stroke="#666" stroke-width="0.6" stroke-linejoin="round"/></svg>
<div class="t" style="left:34.8px;top:205.2px;font-size:5.2px;color:#444">Cylinder &lt;1&gt;</div>
<svg class="abs" style="left:69.5px;top:204.7px" width="8" height="5" viewBox="0 0 8 5"><circle cx="1.8" cy="2.5" r="1.3" fill="none" stroke="#333" stroke-width="0.8"/><path d="M3.2 2.5H7.6M3.2 1.4H6.4M3.2 3.6H6.4" stroke="#333" stroke-width="0.6"/></svg>
<svg class="abs" style="left:26.3px;top:214.1px" width="6" height="7" viewBox="0 0 6 7"><path d="M0.6 3.1H2.2V0.8H4.3V2.3H5.5V6.4H0.6Z" fill="none" stroke="#666" stroke-width="0.6" stroke-linejoin="round"/></svg>
<div class="t" style="left:34.8px;top:215.6px;font-size:5.2px;color:#444">Threa...</div>
<svg class="abs" style="left:54.3px;top:214.6px" width="7" height="6" viewBox="0 0 7 6"><path d="M3.5 0.6V3.2L1 5.2M3.5 3.2L6 5.2" fill="none" stroke="#2b2b2b" stroke-width="1"/><circle cx="3.5" cy="1.2" r="0.9" fill="#2b2b2b"/><circle cx="1.1" cy="5" r="0.8" fill="#2b2b2b"/><circle cx="5.9" cy="5" r="0.8" fill="#2b2b2b"/></svg>
<svg class="abs" style="left:26.3px;top:224.5px" width="6" height="7" viewBox="0 0 6 7"><path d="M0.6 3.1H2.2V0.8H4.3V2.3H5.5V6.4H0.6Z" fill="none" stroke="#666" stroke-width="0.6" stroke-linejoin="round"/></svg>
<div class="t" style="left:34.8px;top:226.0px;font-size:5.2px;color:#444">Threa...</div>
<svg class="abs" style="left:54.3px;top:225.0px" width="7" height="6" viewBox="0 0 7 6"><path d="M3.5 0.6V3.2L1 5.2M3.5 3.2L6 5.2" fill="none" stroke="#2b2b2b" stroke-width="1"/><circle cx="3.5" cy="1.2" r="0.9" fill="#2b2b2b"/><circle cx="1.1" cy="5" r="0.8" fill="#2b2b2b"/><circle cx="5.9" cy="5" r="0.8" fill="#2b2b2b"/></svg>
<svg class="abs" style="left:18.0px;top:235.9px" width="4" height="5" viewBox="0 0 4 5"><path d="M1 0.6L3 2.5L1 4.4" fill="none" stroke="#555" stroke-width="0.7"/></svg>
<svg class="abs" style="left:26.3px;top:234.9px" width="6" height="7" viewBox="0 0 6 7"><path d="M1 0.8H5V2.6H4.2V5.4L3 6.4L1.8 5.4V2.6H1Z" fill="none" stroke="#444" stroke-width="0.7"/><path d="M1.8 3.6H4.2M1.8 4.6H4.2" stroke="#444" stroke-width="0.5"/></svg>
<div class="t" style="left:34.8px;top:236.4px;font-size:5.2px;color:#444">Hex s...</div>
<svg class="abs" style="left:54.3px;top:235.4px" width="7" height="6" viewBox="0 0 7 6"><path d="M3.5 0.6V3.2L1 5.2M3.5 3.2L6 5.2" fill="none" stroke="#2b2b2b" stroke-width="1"/><circle cx="3.5" cy="1.2" r="0.9" fill="#2b2b2b"/><circle cx="1.1" cy="5" r="0.8" fill="#2b2b2b"/><circle cx="5.9" cy="5" r="0.8" fill="#2b2b2b"/></svg>
<svg class="abs" style="left:26.3px;top:245.3px" width="6" height="7" viewBox="0 0 6 7"><path d="M0.6 3.1H2.2V0.8H4.3V2.3H5.5V6.4H0.6Z" fill="none" stroke="#666" stroke-width="0.6" stroke-linejoin="round"/></svg>
<div class="t" style="left:34.8px;top:246.8px;font-size:5.2px;color:#444">Pin fo...</div>
<svg class="abs" style="left:54.3px;top:245.8px" width="7" height="6" viewBox="0 0 7 6"><path d="M3.5 0.6V3.2L1 5.2M3.5 3.2L6 5.2" fill="none" stroke="#2b2b2b" stroke-width="1"/><circle cx="3.5" cy="1.2" r="0.9" fill="#2b2b2b"/><circle cx="1.1" cy="5" r="0.8" fill="#2b2b2b"/><circle cx="5.9" cy="5" r="0.8" fill="#2b2b2b"/></svg>
<svg class="abs" style="left:26.3px;top:255.7px" width="6" height="7" viewBox="0 0 6 7"><path d="M0.6 3.1H2.2V0.8H4.3V2.3H5.5V6.4H0.6Z" fill="none" stroke="#666" stroke-width="0.6" stroke-linejoin="round"/></svg>
<div class="t" style="left:34.8px;top:257.2px;font-size:5.2px;color:#444">Beari...</div>
<svg class="abs" style="left:54.3px;top:256.2px" width="7" height="6" viewBox="0 0 7 6"><path d="M3.5 0.6V3.2L1 5.2M3.5 3.2L6 5.2" fill="none" stroke="#2b2b2b" stroke-width="1"/><circle cx="3.5" cy="1.2" r="0.9" fill="#2b2b2b"/><circle cx="1.1" cy="5" r="0.8" fill="#2b2b2b"/><circle cx="5.9" cy="5" r="0.8" fill="#2b2b2b"/></svg>
<svg class="abs" style="left:26.3px;top:266.0px" width="6" height="7" viewBox="0 0 6 7"><path d="M0.6 3.1H2.2V0.8H4.3V2.3H5.5V6.4H0.6Z" fill="none" stroke="#666" stroke-width="0.6" stroke-linejoin="round"/></svg>
<div class="t" style="left:34.8px;top:267.5px;font-size:5.2px;color:#444">Part 1 &lt;1&gt;</div>
<svg class="abs" style="left:64.0px;top:266.0px" width="4" height="7" viewBox="0 0 4 7"><path d="M2 0.4V6.6" stroke="#222" stroke-width="0.8"/><rect x="1" y="2.2" width="2" height="2.6" fill="#222"/></svg>
<svg class="abs" style="left:26.3px;top:276.4px" width="6" height="7" viewBox="0 0 6 7"><path d="M0.6 3.1H2.2V0.8H4.3V2.3H5.5V6.4H0.6Z" fill="none" stroke="#666" stroke-width="0.6" stroke-linejoin="round"/></svg>
<div class="t" style="left:34.8px;top:277.9px;font-size:5.2px;color:#444">Part 2 &lt;1&gt;</div>
<svg class="abs" style="left:64.0px;top:276.4px" width="4" height="7" viewBox="0 0 4 7"><path d="M2 0.4V6.6" stroke="#222" stroke-width="0.8"/><rect x="1" y="2.2" width="2" height="2.6" fill="#222"/></svg>
<svg class="abs" style="left:26.3px;top:286.8px" width="6" height="7" viewBox="0 0 6 7"><path d="M0.6 3.1H2.2V0.8H4.3V2.3H5.5V6.4H0.6Z" fill="none" stroke="#666" stroke-width="0.6" stroke-linejoin="round"/></svg>
<div class="t" style="left:34.8px;top:288.3px;font-size:5.2px;color:#444">Gear ...</div>
<svg class="abs" style="left:54.3px;top:287.3px" width="7" height="6" viewBox="0 0 7 6"><path d="M3.5 0.6V3.2L1 5.2M3.5 3.2L6 5.2" fill="none" stroke="#2b2b2b" stroke-width="1"/><circle cx="3.5" cy="1.2" r="0.9" fill="#2b2b2b"/><circle cx="1.1" cy="5" r="0.8" fill="#2b2b2b"/><circle cx="5.9" cy="5" r="0.8" fill="#2b2b2b"/></svg>
<svg class="abs" style="left:26.3px;top:297.2px" width="6" height="7" viewBox="0 0 6 7"><path d="M0.6 3.1H2.2V0.8H4.3V2.3H5.5V6.4H0.6Z" fill="none" stroke="#666" stroke-width="0.6" stroke-linejoin="round"/></svg>
<div class="t" style="left:34.8px;top:298.7px;font-size:5.2px;color:#444">Cylinder cap &lt;1&gt;</div>
<svg class="abs" style="left:26.3px;top:307.6px" width="6" height="7" viewBox="0 0 6 7"><path d="M0.6 3.1H2.2V0.8H4.3V2.3H5.5V6.4H0.6Z" fill="none" stroke="#666" stroke-width="0.6" stroke-linejoin="round"/></svg>
<div class="t" style="left:34.8px;top:309.1px;font-size:5.2px;color:#444">Bearing 4x9x4mm ...</div>
<svg class="abs" style="left:18.0px;top:319.0px" width="4" height="5" viewBox="0 0 4 5"><path d="M1 0.6L3 2.5L1 4.4" fill="none" stroke="#555" stroke-width="0.7"/></svg>
<svg class="abs" style="left:25.8px;top:318.5px" width="7" height="6" viewBox="0 0 7 6"><path d="M0.6 3L3 1.2L6.4 2.4L4.4 4.8Z" fill="#555"/><path d="M0.8 4L4.2 5.6L6.2 3.4" fill="none" stroke="#555" stroke-width="0.6"/></svg>
<div class="t" style="left:34.8px;top:319.5px;font-size:5.2px;color:#444">Circular pattern 1</div>
<svg class="abs" style="left:26.3px;top:328.4px" width="6" height="7" viewBox="0 0 6 7"><path d="M0.6 3.1H2.2V0.8H4.3V2.3H5.5V6.4H0.6Z" fill="none" stroke="#666" stroke-width="0.6" stroke-linejoin="round"/></svg>
<div class="t" style="left:34.8px;top:329.9px;font-size:5.2px;color:#444">Pin 4mm &lt;1&gt;</div>
<svg class="abs" style="left:18.0px;top:339.8px" width="4" height="5" viewBox="0 0 4 5"><path d="M1 0.6L3 2.5L1 4.4" fill="none" stroke="#555" stroke-width="0.7"/></svg>
<svg class="abs" style="left:25.8px;top:339.3px" width="7" height="6" viewBox="0 0 7 6"><path d="M0.6 3L3 1.2L6.4 2.4L4.4 4.8Z" fill="#555"/><path d="M0.8 4L4.2 5.6L6.2 3.4" fill="none" stroke="#555" stroke-width="0.6"/></svg>
<div class="t" style="left:34.8px;top:340.3px;font-size:5.2px;color:#444">Circular pattern 2</div>
<svg class="abs" style="left:18.0px;top:350.2px" width="4" height="5" viewBox="0 0 4 5"><path d="M1 0.6L3 2.5L1 4.4" fill="none" stroke="#555" stroke-width="0.7"/></svg>
<svg class="abs" style="left:26.3px;top:349.2px" width="6" height="7" viewBox="0 0 6 7"><path d="M1 0.8H5V2.6H4.2V5.4L3 6.4L1.8 5.4V2.6H1Z" fill="none" stroke="#444" stroke-width="0.7"/><path d="M1.8 3.6H4.2M1.8 4.6H4.2" stroke="#444" stroke-width="0.5"/></svg>
<div class="t" style="left:34.8px;top:350.7px;font-size:5.2px;color:#444">Hex socket head ca...</div>
<svg class="abs" style="left:18.0px;top:360.6px" width="4" height="5" viewBox="0 0 4 5"><path d="M1 0.6L3 2.5L1 4.4" fill="none" stroke="#555" stroke-width="0.7"/></svg>
<svg class="abs" style="left:26.3px;top:359.6px" width="6" height="7" viewBox="0 0 6 7"><path d="M1 0.8H5V2.6H4.2V5.4L3 6.4L1.8 5.4V2.6H1Z" fill="none" stroke="#444" stroke-width="0.7"/><path d="M1.8 3.6H4.2M1.8 4.6H4.2" stroke="#444" stroke-width="0.5"/></svg>
<div class="t" style="left:34.8px;top:361.1px;font-size:5.2px;color:#444">Hex socket head ca...</div>
<svg class="abs" style="left:18.0px;top:370.9px" width="4" height="5" viewBox="0 0 4 5"><path d="M1 0.6L3 2.5L1 4.4" fill="none" stroke="#555" stroke-width="0.7"/></svg>
<svg class="abs" style="left:26.3px;top:369.9px" width="6" height="7" viewBox="0 0 6 7"><path d="M1 0.8H5V2.6H4.2V5.4L3 6.4L1.8 5.4V2.6H1Z" fill="none" stroke="#444" stroke-width="0.7"/><path d="M1.8 3.6H4.2M1.8 4.6H4.2" stroke="#444" stroke-width="0.5"/></svg>
<div class="t" style="left:34.8px;top:371.4px;font-size:5.2px;color:#444">Hex socket head ca...</div>
<svg class="abs" style="left:18.0px;top:381.3px" width="4" height="5" viewBox="0 0 4 5"><path d="M1 0.6L3 2.5L1 4.4" fill="none" stroke="#555" stroke-width="0.7"/></svg>
<svg class="abs" style="left:26.3px;top:380.3px" width="6" height="7" viewBox="0 0 6 7"><path d="M1 0.8H5V2.6H4.2V5.4L3 6.4L1.8 5.4V2.6H1Z" fill="none" stroke="#444" stroke-width="0.7"/><path d="M1.8 3.6H4.2M1.8 4.6H4.2" stroke="#444" stroke-width="0.5"/></svg>
<div class="t" style="left:34.8px;top:381.8px;font-size:5.2px;color:#444">Hex socket head ca...</div>
<svg class="abs" style="left:26.3px;top:390.7px" width="6" height="7" viewBox="0 0 6 7"><path d="M0.6 3.1H2.2V0.8H4.3V2.3H5.5V6.4H0.6Z" fill="none" stroke="#666" stroke-width="0.6" stroke-linejoin="round"/></svg>
<div class="t" style="left:34.8px;top:392.2px;font-size:5.2px;color:#444">Threaded insert M4...</div>
<svg class="abs" style="left:18.0px;top:402.1px" width="4" height="5" viewBox="0 0 4 5"><path d="M1 0.6L3 2.5L1 4.4" fill="none" stroke="#555" stroke-width="0.7"/></svg>
<svg class="abs" style="left:25.8px;top:401.1px" width="7" height="7" viewBox="0 0 7 7"><rect x="0.6" y="0.6" width="5.8" height="5.8" fill="#666"/><rect x="1.4" y="1.4" width="2" height="2" fill="#ddd"/><rect x="3.8" y="3.8" width="2" height="2" fill="#aaa"/></svg>
<div class="t" style="left:34.8px;top:402.6px;font-size:5.2px;color:#444">Linear pattern 1</div>
<svg class="abs" style="left:26.3px;top:411.5px" width="6" height="7" viewBox="0 0 6 7"><path d="M0.6 3.1H2.2V0.8H4.3V2.3H5.5V6.4H0.6Z" fill="none" stroke="#666" stroke-width="0.6" stroke-linejoin="round"/></svg>
<div class="t" style="left:34.8px;top:413.0px;font-size:5.2px;color:#444">Threa...</div>
<svg class="abs" style="left:54.3px;top:412.0px" width="7" height="6" viewBox="0 0 7 6"><path d="M3.5 0.6V3.2L1 5.2M3.5 3.2L6 5.2" fill="none" stroke="#2b2b2b" stroke-width="1"/><circle cx="3.5" cy="1.2" r="0.9" fill="#2b2b2b"/><circle cx="1.1" cy="5" r="0.8" fill="#2b2b2b"/><circle cx="5.9" cy="5" r="0.8" fill="#2b2b2b"/></svg>
<svg class="abs" style="left:26.3px;top:421.9px" width="6" height="7" viewBox="0 0 6 7"><path d="M0.6 3.1H2.2V0.8H4.3V2.3H5.5V6.4H0.6Z" fill="none" stroke="#666" stroke-width="0.6" stroke-linejoin="round"/></svg>
<div class="t" style="left:34.8px;top:423.4px;font-size:5.2px;color:#444">Threa...</div>
<svg class="abs" style="left:54.3px;top:422.4px" width="7" height="6" viewBox="0 0 7 6"><path d="M3.5 0.6V3.2L1 5.2M3.5 3.2L6 5.2" fill="none" stroke="#2b2b2b" stroke-width="1"/><circle cx="3.5" cy="1.2" r="0.9" fill="#2b2b2b"/><circle cx="1.1" cy="5" r="0.8" fill="#2b2b2b"/><circle cx="5.9" cy="5" r="0.8" fill="#2b2b2b"/></svg>
<svg class="abs" style="left:18.0px;top:433.3px" width="4" height="5" viewBox="0 0 4 5"><path d="M1 0.6L3 2.5L1 4.4" fill="none" stroke="#555" stroke-width="0.7"/></svg>
<svg class="abs" style="left:26.3px;top:432.3px" width="6" height="7" viewBox="0 0 6 7"><path d="M1 0.8H5V2.6H4.2V5.4L3 6.4L1.8 5.4V2.6H1Z" fill="none" stroke="#444" stroke-width="0.7"/><path d="M1.8 3.6H4.2M1.8 4.6H4.2" stroke="#444" stroke-width="0.5"/></svg>
<div class="t" style="left:34.8px;top:433.8px;font-size:5.2px;color:#444">Slotte...</div>
<svg class="abs" style="left:54.3px;top:432.8px" width="7" height="6" viewBox="0 0 7 6"><path d="M3.5 0.6V3.2L1 5.2M3.5 3.2L6 5.2" fill="none" stroke="#2b2b2b" stroke-width="1"/><circle cx="3.5" cy="1.2" r="0.9" fill="#2b2b2b"/><circle cx="1.1" cy="5" r="0.8" fill="#2b2b2b"/><circle cx="5.9" cy="5" r="0.8" fill="#2b2b2b"/></svg>
<svg class="abs" style="left:18.0px;top:443.7px" width="4" height="5" viewBox="0 0 4 5"><path d="M1 0.6L3 2.5L1 4.4" fill="none" stroke="#555" stroke-width="0.7"/></svg>
<svg class="abs" style="left:26.3px;top:442.7px" width="6" height="7" viewBox="0 0 6 7"><path d="M1 0.8H5V2.6H4.2V5.4L3 6.4L1.8 5.4V2.6H1Z" fill="none" stroke="#444" stroke-width="0.7"/><path d="M1.8 3.6H4.2M1.8 4.6H4.2" stroke="#444" stroke-width="0.5"/></svg>
<div class="t" style="left:34.8px;top:444.2px;font-size:5.2px;color:#444">Slotte...</div>
<svg class="abs" style="left:54.3px;top:443.2px" width="7" height="6" viewBox="0 0 7 6"><path d="M3.5 0.6V3.2L1 5.2M3.5 3.2L6 5.2" fill="none" stroke="#2b2b2b" stroke-width="1"/><circle cx="3.5" cy="1.2" r="0.9" fill="#2b2b2b"/><circle cx="1.1" cy="5" r="0.8" fill="#2b2b2b"/><circle cx="5.9" cy="5" r="0.8" fill="#2b2b2b"/></svg>
<svg class="abs" style="left:26.3px;top:453.1px" width="6" height="7" viewBox="0 0 6 7"><path d="M0.6 3.1H2.2V0.8H4.3V2.3H5.5V6.4H0.6Z" fill="none" stroke="#666" stroke-width="0.6" stroke-linejoin="round"/></svg>
<div class="t" style="left:34.8px;top:454.6px;font-size:5.2px;color:#444">Threa...</div>
<svg class="abs" style="left:54.3px;top:453.6px" width="7" height="6" viewBox="0 0 7 6"><path d="M3.5 0.6V3.2L1 5.2M3.5 3.2L6 5.2" fill="none" stroke="#2b2b2b" stroke-width="1"/><circle cx="3.5" cy="1.2" r="0.9" fill="#2b2b2b"/><circle cx="1.1" cy="5" r="0.8" fill="#2b2b2b"/><circle cx="5.9" cy="5" r="0.8" fill="#2b2b2b"/></svg>
<svg class="abs" style="left:26.3px;top:463.5px" width="6" height="7" viewBox="0 0 6 7"><path d="M0.6 3.1H2.2V0.8H4.3V2.3H5.5V6.4H0.6Z" fill="none" stroke="#666" stroke-width="0.6" stroke-linejoin="round"/></svg>
<div class="t" style="left:34.8px;top:465.0px;font-size:5.2px;color:#444">Micro ser...</div>
<svg class="abs" style="left:64.0px;top:463.5px" width="4" height="7" viewBox="0 0 4 7"><path d="M2 0.4V6.6" stroke="#222" stroke-width="0.8"/><rect x="1" y="2.2" width="2" height="2.6" fill="#222"/></svg>
<svg class="abs" style="left:18.0px;top:474.8px" width="4" height="5" viewBox="0 0 4 5"><path d="M1 0.6L3 2.5L1 4.4" fill="none" stroke="#555" stroke-width="0.7"/></svg>
<svg class="abs" style="left:26.3px;top:473.8px" width="6" height="7" viewBox="0 0 6 7"><path d="M1 0.8H5V2.6H4.2V5.4L3 6.4L1.8 5.4V2.6H1Z" fill="none" stroke="#444" stroke-width="0.7"/><path d="M1.8 3.6H4.2M1.8 4.6H4.2" stroke="#444" stroke-width="0.5"/></svg>
<div class="t" style="left:34.8px;top:475.3px;font-size:5.2px;color:#444">Hex socket head ca...</div>
<svg class="abs" style="left:18.0px;top:485.2px" width="4" height="5" viewBox="0 0 4 5"><path d="M1 0.6L3 2.5L1 4.4" fill="none" stroke="#555" stroke-width="0.7"/></svg>
<svg class="abs" style="left:26.3px;top:484.2px" width="6" height="7" viewBox="0 0 6 7"><path d="M1 0.8H5V2.6H4.2V5.4L3 6.4L1.8 5.4V2.6H1Z" fill="none" stroke="#444" stroke-width="0.7"/><path d="M1.8 3.6H4.2M1.8 4.6H4.2" stroke="#444" stroke-width="0.5"/></svg>
<div class="t" style="left:34.8px;top:485.7px;font-size:5.2px;color:#444">Hex socket head ca...</div>
<svg class="abs" style="left:18.0px;top:495.6px" width="4" height="5" viewBox="0 0 4 5"><path d="M1 0.6L3 2.5L1 4.4" fill="none" stroke="#555" stroke-width="0.7"/></svg>
<svg class="abs" style="left:26.3px;top:494.6px" width="6" height="7" viewBox="0 0 6 7"><path d="M1 0.8H5V2.6H4.2V5.4L3 6.4L1.8 5.4V2.6H1Z" fill="none" stroke="#444" stroke-width="0.7"/><path d="M1.8 3.6H4.2M1.8 4.6H4.2" stroke="#444" stroke-width="0.5"/></svg>
<div class="t" style="left:34.8px;top:496.1px;font-size:5.2px;color:#444">Hex ...</div>
<svg class="abs" style="left:54.3px;top:495.1px" width="7" height="6" viewBox="0 0 7 6"><path d="M3.5 0.6V3.2L1 5.2M3.5 3.2L6 5.2" fill="none" stroke="#2b2b2b" stroke-width="1"/><circle cx="3.5" cy="1.2" r="0.9" fill="#2b2b2b"/><circle cx="1.1" cy="5" r="0.8" fill="#2b2b2b"/><circle cx="5.9" cy="5" r="0.8" fill="#2b2b2b"/></svg>
<svg class="abs" style="left:18.0px;top:506.0px" width="4" height="5" viewBox="0 0 4 5"><path d="M1 0.6L3 2.5L1 4.4" fill="none" stroke="#555" stroke-width="0.7"/></svg>
<svg class="abs" style="left:26.3px;top:505.0px" width="6" height="7" viewBox="0 0 6 7"><path d="M1 0.8H5V2.6H4.2V5.4L3 6.4L1.8 5.4V2.6H1Z" fill="none" stroke="#444" stroke-width="0.7"/><path d="M1.8 3.6H4.2M1.8 4.6H4.2" stroke="#444" stroke-width="0.5"/></svg>
<div class="t" style="left:34.8px;top:506.5px;font-size:5.2px;color:#444">Hex ...</div>
<svg class="abs" style="left:54.3px;top:505.5px" width="7" height="6" viewBox="0 0 7 6"><path d="M3.5 0.6V3.2L1 5.2M3.5 3.2L6 5.2" fill="none" stroke="#2b2b2b" stroke-width="1"/><circle cx="3.5" cy="1.2" r="0.9" fill="#2b2b2b"/><circle cx="1.1" cy="5" r="0.8" fill="#2b2b2b"/><circle cx="5.9" cy="5" r="0.8" fill="#2b2b2b"/></svg>
<svg class="abs" style="left:18.0px;top:516.4px" width="4" height="5" viewBox="0 0 4 5"><path d="M1 0.6L3 2.5L1 4.4" fill="none" stroke="#555" stroke-width="0.7"/></svg>
<svg class="abs" style="left:26.3px;top:515.4px" width="6" height="7" viewBox="0 0 6 7"><path d="M1 0.8H5V2.6H4.2V5.4L3 6.4L1.8 5.4V2.6H1Z" fill="none" stroke="#444" stroke-width="0.7"/><path d="M1.8 3.6H4.2M1.8 4.6H4.2" stroke="#444" stroke-width="0.5"/></svg>
<div class="t" style="left:34.8px;top:516.9px;font-size:5.2px;color:#444">Hex ...</div>
<svg class="abs" style="left:54.3px;top:515.9px" width="7" height="6" viewBox="0 0 7 6"><path d="M3.5 0.6V3.2L1 5.2M3.5 3.2L6 5.2" fill="none" stroke="#2b2b2b" stroke-width="1"/><circle cx="3.5" cy="1.2" r="0.9" fill="#2b2b2b"/><circle cx="1.1" cy="5" r="0.8" fill="#2b2b2b"/><circle cx="5.9" cy="5" r="0.8" fill="#2b2b2b"/></svg>
<svg class="abs" style="left:18.0px;top:526.8px" width="4" height="5" viewBox="0 0 4 5"><path d="M1 0.6L3 2.5L1 4.4" fill="none" stroke="#555" stroke-width="0.7"/></svg>
<svg class="abs" style="left:26.3px;top:525.8px" width="6" height="7" viewBox="0 0 6 7"><path d="M1 0.8H5V2.6H4.2V5.4L3 6.4L1.8 5.4V2.6H1Z" fill="none" stroke="#444" stroke-width="0.7"/><path d="M1.8 3.6H4.2M1.8 4.6H4.2" stroke="#444" stroke-width="0.5"/></svg>
<div class="t" style="left:34.8px;top:527.3px;font-size:5.2px;color:#444">Hex ...</div>
<svg class="abs" style="left:18.0px;top:537.2px" width="4" height="5" viewBox="0 0 4 5"><path d="M1 0.6L3 2.5L1 4.4" fill="none" stroke="#555" stroke-width="0.7"/></svg>
<svg class="abs" style="left:26.3px;top:536.2px" width="6" height="7" viewBox="0 0 6 7"><path d="M1 0.8H5V2.6H4.2V5.4L3 6.4L1.8 5.4V2.6H1Z" fill="none" stroke="#444" stroke-width="0.7"/><path d="M1.8 3.6H4.2M1.8 4.6H4.2" stroke="#444" stroke-width="0.5"/></svg>
<div class="t" style="left:34.8px;top:537.7px;font-size:5.2px;color:#444">Hex ...</div>
<div class="abs" style="left:100px;top:296.5px;width:11px;height:13px;border:0.5px dotted #ccc;background:#fafafa"></div>
<svg class="abs" style="left:102.0px;top:299.5px" width="7" height="7" viewBox="0 0 7 7"><path d="M0.6 1H6.4M0.6 2.8H6.4M0.6 4.6H6.4M0.6 6.4H6.4" stroke="#9a9a9a" stroke-width="0.8"/><path d="M2.4 1V6.4" stroke="#9a9a9a" stroke-width="0.6"/></svg>
<!-- bottom tab bar -->
<div id="btm" class="abs">
<div class="bt" style="left:17px;width:95px;background:#fff;color:#333;"><svg style="position:absolute;left:5.8px;top:2.4px" width="6.9" height="8" viewBox="0 0 6 7"><rect x="0.8" y="1" width="4.4" height="5" fill="none" stroke="#555" stroke-width="0.6"/><rect x="2" y="2.4" width="2" height="2" fill="#777"/></svg><span>Assembly 1</span></div>
<div class="bt" style="left:112px;width:81.5px;"><svg style="position:absolute;left:5.8px;top:2.4px" width="6.9" height="8" viewBox="0 0 6 7"><path d="M0.6 3.1H2.2V0.8H4.3V2.3H5.5V6.4H0.6Z" fill="none" stroke="#666" stroke-width="0.6" stroke-linejoin="round"/></svg><span>Part Studio 0</span></div>
<div class="bt" style="left:193.5px;width:81.0px;"><svg style="position:absolute;left:5.8px;top:2.4px" width="6.9" height="8" viewBox="0 0 6 7"><path d="M0.6 3.1H2.2V0.8H4.3V2.3H5.5V6.4H0.6Z" fill="none" stroke="#666" stroke-width="0.6" stroke-linejoin="round"/></svg><span>Part Studio 1</span></div>
<div class="bt" style="left:274.5px;width:81.5px;"><svg style="position:absolute;left:5.8px;top:2.4px" width="6.9" height="8" viewBox="0 0 6 7"><path d="M0.6 3.1H2.2V0.8H4.3V2.3H5.5V6.4H0.6Z" fill="none" stroke="#666" stroke-width="0.6" stroke-linejoin="round"/></svg><span>Part Studio 1 Copy 1</span></div>
<div class="bt" style="left:356px;width:81.5px;"><svg style="position:absolute;left:5.8px;top:2.4px" width="6.9" height="8" viewBox="0 0 6 7"><path d="M0.6 3.1H2.2V0.8H4.3V2.3H5.5V6.4H0.6Z" fill="none" stroke="#666" stroke-width="0.6" stroke-linejoin="round"/></svg><span>Part Studio 2</span></div>
<div class="bt" style="left:437.5px;width:81.0px;"><svg style="position:absolute;left:5.8px;top:2.4px" width="6.9" height="8" viewBox="0 0 6 7"><path d="M0.6 3.1H2.2V0.8H4.3V2.3H5.5V6.4H0.6Z" fill="none" stroke="#666" stroke-width="0.6" stroke-linejoin="round"/></svg><span>Part Studio 3</span></div>
<div class="bt" style="left:518.5px;width:81.5px;"><svg style="position:absolute;left:5.8px;top:2.4px" width="6.9" height="8" viewBox="0 0 6 7"><path d="M0.6 3.1H2.2V0.8H4.3V2.3H5.5V6.4H0.6Z" fill="none" stroke="#666" stroke-width="0.6" stroke-linejoin="round"/></svg><span>Part Studio 4</span></div>
<div class="bt" style="left:600px;width:81px;"><svg style="position:absolute;left:5.8px;top:2.4px" width="6.9" height="8" viewBox="0 0 6 7"><path d="M0.6 3.1H2.2V0.8H4.3V2.3H5.5V6.4H0.6Z" fill="none" stroke="#666" stroke-width="0.6" stroke-linejoin="round"/></svg><span>Part Studio 5</span></div>
<div class="bt" style="left:681px;width:81px;"><svg style="position:absolute;left:5.8px;top:2.4px" width="6.9" height="8" viewBox="0 0 6 7"><path d="M0.6 3.1H2.2V0.8H4.3V2.3H5.5V6.4H0.6Z" fill="none" stroke="#666" stroke-width="0.6" stroke-linejoin="round"/></svg><span>Part Studio 6</span></div>
<div class="bt" style="left:762px;width:81px;"><svg style="position:absolute;left:5.8px;top:2.4px" width="6.9" height="8" viewBox="0 0 6 7"><path d="M0.6 3.1H2.2V0.8H4.3V2.3H5.5V6.4H0.6Z" fill="none" stroke="#666" stroke-width="0.6" stroke-linejoin="round"/></svg><span>Part Studio 7</span></div>
<div class="bt" style="left:843px;width:77px;"><svg style="position:absolute;left:5.8px;top:2.4px" width="6.9" height="8" viewBox="0 0 6 7"><path d="M0.6 3.1H2.2V0.8H4.3V2.3H5.5V6.4H0.6Z" fill="none" stroke="#666" stroke-width="0.6" stroke-linejoin="round"/></svg><span>Part Studio 8</span></div>
</div>
<svg class="abs" style="left:2.0px;top:550.5px" width="7" height="6" viewBox="0 0 7 6"><path d="M0.8 2.2L4.4 0.8V5L0.8 3.6Z" fill="#222"/><path d="M1.6 3.6L2.2 5.6" stroke="#222" stroke-width="0.8"/><circle cx="5" cy="4.4" r="1.2" fill="none" stroke="#222" stroke-width="0.6"/></svg>
<div class="t" style="left:10.8px;top:548.8px;font-size:8px;color:#333">+</div>
<svg class="abs" style="left:985.0px;top:540.3px" width="7" height="6" viewBox="0 0 7 6"><path d="M0.6 5.4H6.4" stroke="#7a7a7a" stroke-width="0.8"/><circle cx="4.2" cy="2.8" r="1.8" fill="#7a7a7a"/><rect x="0.8" y="3" width="2" height="2.4" fill="#7a7a7a"/></svg>
<svg class="abs" style="left:998.6px;top:539.7px" width="8" height="7" viewBox="0 0 8 7"><path d="M0.8 5.8A3.2 3.2 0 1 1 7.2 5.8Z" fill="none" stroke="#7a7a7a" stroke-width="1"/><path d="M4 5.4L5.6 3" stroke="#7a7a7a" stroke-width="0.8"/><path d="M0.6 6.4H7.4" stroke="#7a7a7a" stroke-width="0.6"/></svg>
<svg class="abs" style="left:1013.1px;top:539.7px" width="7" height="7" viewBox="0 0 7 7"><rect x="0.8" y="0.8" width="5.4" height="3.6" fill="none" stroke="#7a7a7a" stroke-width="0.8"/><path d="M3.5 4.4V5.6M1 6.2H6" stroke="#7a7a7a" stroke-width="0.8"/><path d="M2 2H5M2 3.2H5" stroke="#7a7a7a" stroke-width="0.5"/></svg>
<div class="abs" style="left:1012.5px;top:264px;width:12px;height:80px;background:#fbfbfb;border:0.6px solid #dcdcdc;border-right:none;border-radius:2px 0 0 2px"></div>
<svg class="abs" style="left:1014.5px;top:265.8px" width="8.4" height="8.4" viewBox="0 0 7 7"><rect x="0.8" y="0.8" width="5.4" height="5.4" fill="none" stroke="#3a3a3a" stroke-width="0.7"/><rect x="2.4" y="2.4" width="3" height="3" fill="#666"/><path d="M1.6 1.8H5" stroke="#3a3a3a" stroke-width="0.5"/></svg>
<svg class="abs" style="left:1014.5px;top:279.4px" width="8.4" height="8.4" viewBox="0 0 7 7"><rect x="0.8" y="0.8" width="3.4" height="3.4" fill="#3b6fc4"/><rect x="3" y="3" width="3.4" height="3.4" fill="none" stroke="#3a3a3a" stroke-width="0.7"/><circle cx="5.6" cy="1.6" r="1" fill="#777"/></svg>
<svg class="abs" style="left:1014.5px;top:292.8px" width="8.4" height="8.4" viewBox="0 0 7 7"><path d="M0.8 1L2 2.6M1 4.8L2.6 3.4" stroke="#777" stroke-width="0.7"/><rect x="3" y="3.2" width="3.2" height="3" fill="none" stroke="#777" stroke-width="0.7"/></svg>
<svg class="abs" style="left:1014.5px;top:306.4px" width="8.4" height="8.4" viewBox="0 0 7 7"><rect x="0.8" y="3" width="4" height="3.2" fill="none" stroke="#666" stroke-width="0.7"/><rect x="4" y="0.8" width="2.4" height="2.4" fill="#888"/></svg>
<svg class="abs" style="left:1014.5px;top:319.6px" width="8.4" height="8.4" viewBox="0 0 7 7"><circle cx="3.5" cy="3.5" r="2.8" fill="#2e62b8"/><path d="M1.6 2.4A2.4 2.4 0 0 1 4 1.2" stroke="#9db8e6" stroke-width="0.8" fill="none"/></svg>
<svg class="abs" style="left:1014.5px;top:332.2px" width="8.4" height="8.4" viewBox="0 0 7 7"><rect x="0.8" y="1" width="3.6" height="5" fill="none" stroke="#3a3a3a" stroke-width="0.8"/><path d="M4.4 2.6H6.2V6H4.4" fill="none" stroke="#3a3a3a" stroke-width="0.7"/><path d="M1.8 2.4H3.4M1.8 3.6H3.4" stroke="#3a3a3a" stroke-width="0.5"/></svg>
<div class="abs" style="left:1013.5px;top:277px;width:10.5px;height:0.6px;background:#e6e6e6"></div>
<div class="abs" style="left:1013.5px;top:290.3px;width:10.5px;height:0.6px;background:#e6e6e6"></div>
<div class="abs" style="left:1013.5px;top:303.8px;width:10.5px;height:0.6px;background:#e6e6e6"></div>
<div class="abs" style="left:1013.5px;top:317.2px;width:10.5px;height:0.6px;background:#e6e6e6"></div>
<div class="abs" style="left:1013.5px;top:330.2px;width:10.5px;height:0.6px;background:#e6e6e6"></div>
<!-- view cube -->
<svg class="abs" style="left:950px;top:65px" width="74" height="75" viewBox="950 65 74 75">
<path d="M968 82.5 A28.5 28.5 0 0 1 983.5 74.3M995.5 74.7 A28.5 28.5 0 0 1 1009.7 83" fill="none" stroke="#e2e2e8" stroke-width="1.5"/>
<path d="M986.5 74.5L988.7 72.5L991 74.5Z" fill="#e2e2e6"/>
<path d="M986.5 128L988.7 130L991 128Z" fill="#e6e6ea"/>
<path d="M962.5 99L960.5 101.5L962.5 104Z" fill="#e2e2e6"/>
<path d="M1015 99L1017.2 101.5L1015 104Z" fill="#e2e2e6"/>
<path d="M973 91.5L988 89.5L988 113L973 111.5Z" fill="#f6f7f8" stroke="#e1e4e6" stroke-width="1"/>
<path d="M988 89.5L1004.5 88.5L1004.5 110L988 113Z" fill="#f3f4f5" stroke="#e1e4e6" stroke-width="1"/>
<path d="M973 91.5L988 89.5L1004.5 88.5L990 87.5Z" fill="#fafafa" stroke="#e6e8ea" stroke-width="0.6"/>
<path d="M971.2 86V113.3" stroke="#7b78c8" stroke-width="0.7"/>
<path d="M971.2 113.3L989 116" stroke="#e05a6a" stroke-width="0.7"/>
<text x="970" y="86" font-size="4.2" fill="#4a46b0" font-family="Liberation Sans, sans-serif">Z</text>
<text x="988.5" y="118.5" font-size="4.5" fill="#d03a4a" font-family="Liberation Sans, sans-serif">X</text>
<text x="980.2" y="103.6" font-size="4.2" fill="#666" text-anchor="middle" font-family="Liberation Sans, sans-serif">Front</text>
<text x="996.3" y="103" font-size="4.2" fill="#666" text-anchor="middle" font-family="Liberation Sans, sans-serif" transform="rotate(-8 996.3 102)">Right</text>
<path d="M1004 124.5L1007.5 123.5L1010 125V129L1006.5 130.5L1004 129Z" fill="#bdbdbd" stroke="#8a8a8a" stroke-width="0.5"/>
<path d="M1004 124.5L1006.5 126L1010 125M1006.5 126V130.5" fill="none" stroke="#8a8a8a" stroke-width="0.4"/>
<path d="M1013.5 126.2H1016.5L1015 127.8Z" fill="#333"/>
</svg>
<!-- watermark -->
<svg class="abs" style="left:0;top:490px" width="160" height="69" viewBox="0 490 160 69">
<defs>
<linearGradient id="wmg" x1="0" x2="0" y1="0" y2="1"><stop offset="0" stop-color="#9ccbe6"/><stop offset="0.5" stop-color="#6fb0d6"/><stop offset="1" stop-color="#4f93bf"/></linearGradient>
<linearGradient id="wmm" x1="0" x2="1" y1="0" y2="0"><stop offset="0" stop-color="#7fb2d2"/><stop offset="0.5" stop-color="#bcd9ea"/><stop offset="1" stop-color="#5c9cc6"/></linearGradient>
</defs>
<g opacity="0.92" font-family="DejaVu Sans, Liberation Sans, sans-serif" font-weight="bold" stroke-linejoin="round">
<g transform="translate(3.9 541) scale(0.96 1)"><text x="0" y="0" font-size="59" fill="#e6f1f8" stroke="#e6f1f8" stroke-width="4.5">M</text><text x="0" y="0" font-size="59" fill="url(#wmm)" stroke="url(#wmm)" stroke-width="2">M</text></g>
<g transform="translate(75 515.3) scale(0.64 1)"><text x="0" y="0" font-size="19" fill="#e6f1f8" stroke="#e6f1f8" stroke-width="4.6">How To</text><text x="0" y="0" font-size="19" fill="url(#wmg)" stroke="url(#wmg)" stroke-width="2.6">How To</text></g>
<g transform="translate(56.3 540.3) scale(0.675 1)"><text x="0" y="0" font-size="17" fill="#e6f1f8" stroke="#e6f1f8" stroke-width="4.4">ECHATRONICS</text><text x="0" y="0" font-size="17" fill="url(#wmg)" stroke="url(#wmg)" stroke-width="2.4">ECHATRONICS</text></g>
</g>
<text x="7.5" y="553.6" font-family="Liberation Mono, monospace" font-size="9.4" fill="#2a2a2a" stroke="#f2f2f2" stroke-width="1.6" paint-order="stroke" textLength="141.5" lengthAdjust="spacingAndGlyphs">www.HowToMechatronics.com</text>
</svg>
</body></html>
